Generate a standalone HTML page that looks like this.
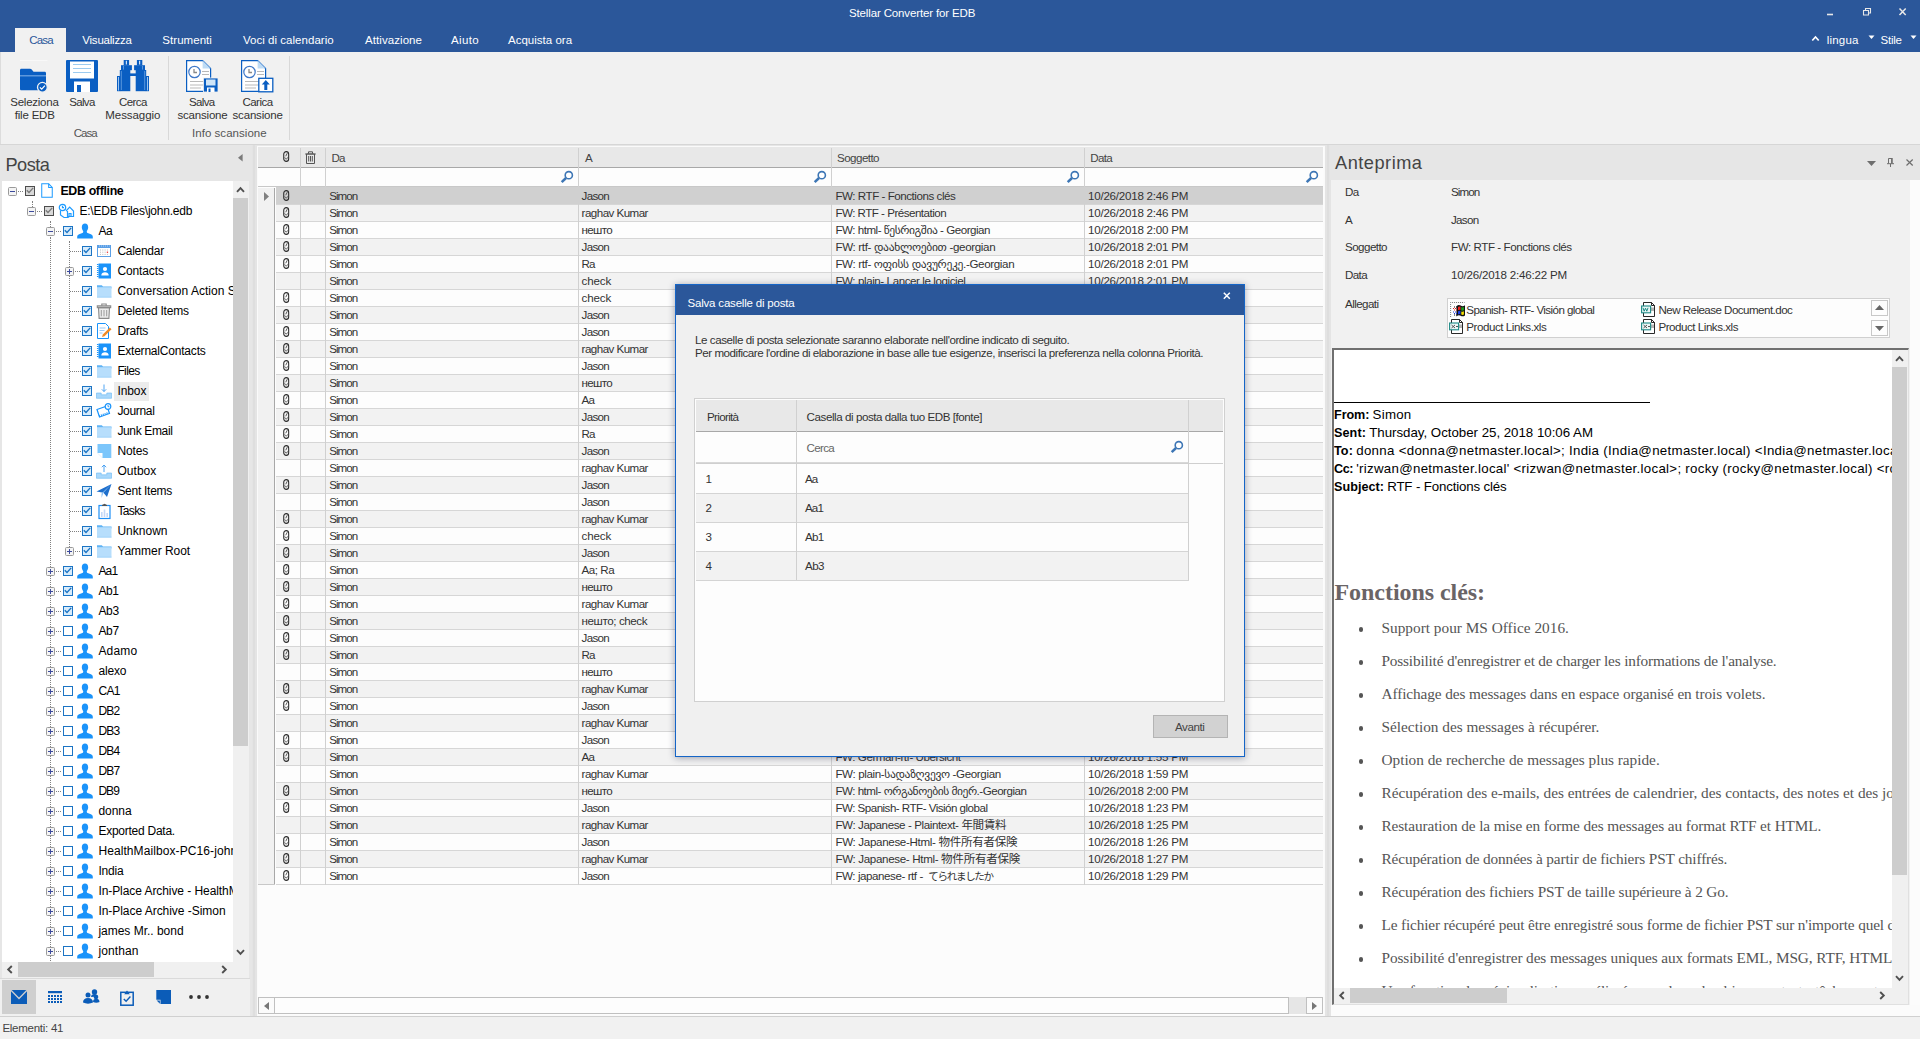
<!DOCTYPE html>
<html><head><meta charset="utf-8"><title>Stellar Converter for EDB</title>
<style>
*{box-sizing:border-box;margin:0;padding:0}
html,body{width:1920px;height:1039px;overflow:hidden;background:#f1f1f1}
body{font-family:"Liberation Sans","Noto Sans CJK JP","DejaVu Sans",sans-serif;font-size:12px;color:#333;position:relative}
.abs{position:absolute}
.t{position:absolute;white-space:pre;line-height:14px}
.u12{font-size:11.5px}.u12b{font-size:12.4px;font-weight:bold}.t12{font-size:12px}.k10{font-size:10.5px;color:#333}.g11{font-size:11.6px;color:#333}.u18{font-size:18.2px;color:#444}
.cal{font-size:13.3px;color:#000}
.ser{font-family:"Liberation Serif",serif;font-size:15.3px;color:#555}
.serb{font-family:"Liberation Serif",serif;font-size:24px;font-weight:bold;color:#6a6466}
svg{position:absolute;overflow:visible}
.tr{position:absolute;left:0;height:20px;width:231px;white-space:nowrap}
.cb{position:absolute;width:10px;height:10px;top:5px;border:1px solid #1b74c4;background:#fff}
.cb.on{background:#d9ecfb}
.cb.g{border-color:#4d4d4d;background:#d9d9d9}
.ex{position:absolute;width:9px;height:9px;top:6px;border:1px solid #9a9a9a;border-radius:1.5px;background:#f4f4f4}
.ex:before{content:"";position:absolute;left:1px;top:3px;width:5px;height:1px;background:#3c4a9c}
.ex.p:after{content:"";position:absolute;left:3px;top:1px;width:1px;height:5px;background:#3c4a9c}
.hd{position:absolute;border-top:1px dotted #808080;height:0}
.vd{position:absolute;border-left:1px dotted #808080;width:0}
.gr{position:absolute;left:276px;width:1047px;height:17px;border-bottom:1px solid #d6d6d6}
.gr.o{background:#f2f2f2}.gr.e{background:#fdfdfd}.gr.s{background:#d0d0d0}
.gr .t{top:1.5px}
.vl{position:absolute;width:1px;background:#d0d0d0}
.bu{position:absolute;left:24.500px;width:4.500px;height:4.500px;border-radius:50%;background:#555}
</style></head><body>


<div class="abs" style="left:0;top:0;width:1920px;height:52px;background:#2b579a"></div>
<div class="t u12" style="left:849px;top:6px;letter-spacing:-0.14px;color:#fff;">Stellar Converter for EDB</div>
<svg style="left:1820px;top:0" width="100" height="28"><path stroke="#e8e8e8" stroke-width="1.600" fill="none" d="M7 14.500h6"/><path stroke="#e8e8e8" stroke-width="1.100" fill="none" d="M43.500 10.500h5V15h-5zM45.500 10.500v-2h5V13h-2"/><path stroke="#e8e8e8" stroke-width="1.500" fill="none" d="M79.500 8.500l6.200 6.500M85.700 8.500l-6.200 6.500"/></svg>
<div class="abs" style="left:15px;top:28px;width:51px;height:25px;background:#f1f1f1"></div>
<div class="t u12" style="left:29.3px;top:33px;letter-spacing:-0.86px;color:#2b579a;">Casa</div>
<div class="t u12" style="left:82.3px;top:33px;letter-spacing:-0.22px;color:#fff;">Visualizza</div>
<div class="t u12" style="left:162.3px;top:33px;letter-spacing:0.05px;color:#fff;">Strumenti</div>
<div class="t u12" style="left:243px;top:33px;letter-spacing:0.03px;color:#fff;">Voci di calendario</div>
<div class="t u12" style="left:365px;top:33px;letter-spacing:0.07px;color:#fff;">Attivazione</div>
<div class="t u12" style="left:451px;top:33px;letter-spacing:0.36px;color:#fff;">Aiuto</div>
<div class="t u12" style="left:508px;top:33px;letter-spacing:0.01px;color:#fff;">Acquista ora</div>
<svg style="left:1811px;top:34px" width="10" height="8"><path d="M1.300 6.500l3.200-3.500 3.200 3.500" fill="none" stroke="#fff" stroke-width="1.700"/></svg>
<div class="t u12" style="left:1826.7px;top:33px;letter-spacing:0.22px;color:#fff;">lingua</div>
<svg style="left:1868px;top:35px" width="8" height="5"><path d="M.5 .5h6l-3 3.500z" fill="#fff"/></svg>
<div class="t u12" style="left:1880.5px;top:33px;letter-spacing:-0.24px;color:#fff;">Stile</div>
<svg style="left:1910px;top:35px" width="8" height="5"><path d="M.5 .5h6l-3 3.500z" fill="#fff"/></svg>
<div class="abs" style="left:0;top:52px;width:1920px;height:93px;background:#f1f1f1;border-bottom:1px solid #d6d6d6"></div>
<div class="abs" style="left:0;top:52px;width:1px;height:92px;background:#dcdcdc"></div>
<div class="abs" style="left:168px;top:56px;width:1px;height:84px;background:#d8d8d8"></div>
<div class="abs" style="left:289px;top:56px;width:1px;height:84px;background:#d8d8d8"></div>
<svg style="left:20px;top:60px" width="28" height="32" viewBox="0 0 28 32"><rect x="0" y=".2" width="27.500" height=".8" fill="#fbfbfb"/><path fill="#0a5ec2" d="M1.500 8.700H10c.8 0 1.200.3 1.700.9l1.800 2.200H24.500c1 0 1.500.5 1.500 1.500V28.700c0 1-.5 1.500-1.500 1.500h-23C.5 30.200 0 29.700 0 28.700V10.200c0-1 .5-1.500 1.500-1.500z"/><rect x="0" y="15" width="26" height="1.500" fill="#5c97dc"/><circle cx="22.400" cy="27.300" r="4.900" fill="#0a5ec2" stroke="#f1f1f1" stroke-width="1.300"/><path d="M19.900 27.400l1.800 1.800 3.200-3.500" stroke="#fff" stroke-width="1.200" fill="none"/></svg>
<svg style="left:66px;top:60px" width="32" height="32" viewBox="0 0 32 32"><rect width="32" height="32" fill="#0a5ec2" rx="1"/><rect x="4" y="1.500" width="24" height="17" fill="#fff"/><path stroke="#9ccbf0" stroke-width="1" d="M7 4.500h18M7 8.500h18M7 12.500h18"/><rect x="8" y="21.500" width="16" height="10.500" fill="#fff"/><rect x="11" y="25" width="4" height="7" fill="#0a5ec2"/></svg>
<svg style="left:117px;top:60px" width="32" height="32" viewBox="0 0 32 32"><g fill="#0a5ec2"><rect x="6.700" y="0" width="5.400" height="5.500"/><rect x="19.900" y="0" width="5.400" height="5.500"/><rect x="4" y="5.200" width="10.900" height="5"/><rect x="17.100" y="5.200" width="10.900" height="5"/><rect x="2.800" y="10" width="10.500" height="21.200"/><rect x="18.700" y="10" width="10.500" height="21.200"/><rect x="0" y="16" width="3.200" height="15.200"/><rect x="28.800" y="16" width="3.200" height="15.200"/><rect x="13" y="13.400" width="6" height="2.600"/></g><path stroke="#9cc4ef" stroke-width="1" d="M1.500 17v13.500M30.500 17v13.500"/><path stroke="#cfe2f7" stroke-width="1.200" d="M9.400 .8v3.800M22.600 .8v3.800"/><path stroke="#6ea6e3" stroke-width=".8" d="M4.300 11v19M27.700 11v19M6.500 5.800v3.800M25.500 5.800v3.800"/></svg>
<svg style="left:186px;top:60px" width="32" height="32" viewBox="0 0 32 32"><path fill="#fff" stroke="#0a5ec2" stroke-width="1.200" d="M.6 .6h16l8 8v22.800H.6z"/><path fill="#bfdcf5" d="M16.600 .6l8 8h-8z"/><circle cx="8.500" cy="12" r="5.700" fill="#fff" stroke="#3f78c8" stroke-width="1.200"/><path stroke="#8a8a8a" stroke-width="1.300" fill="none" d="M8 9v3.500h3"/><path stroke="#b9b9b9" stroke-width="1.200" d="M16 11.500h7M16 14.500h7M4 21.500h15M4 25h15M4 28h11"/><rect x="17.500" y="18" width="14.500" height="14" fill="#0a5ec2" stroke="#f1f1f1" stroke-width=".8"/><rect x="20" y="19.500" width="9.500" height="6" fill="#cfe5f8"/><rect x="21" y="27.500" width="7.500" height="4.500" fill="#fff"/><rect x="22.500" y="28.500" width="2" height="3.500" fill="#0a5ec2"/></svg>
<svg style="left:241px;top:60px" width="32" height="32" viewBox="0 0 32 32"><path fill="#fff" stroke="#0a5ec2" stroke-width="1.200" d="M.6 .6h16l8 8v22.800H.6z"/><path fill="#bfdcf5" d="M16.600 .6l8 8h-8z"/><circle cx="8.500" cy="12" r="5.700" fill="#fff" stroke="#3f78c8" stroke-width="1.200"/><path stroke="#8a8a8a" stroke-width="1.300" fill="none" d="M8 9v3.500h3"/><path stroke="#b9b9b9" stroke-width="1.200" d="M16 11.500h7M16 14.500h7M4 21.500h15M4 25h15M4 28h11"/><rect x="17.800" y="18.300" width="14" height="13.500" fill="#fff" stroke="#0a5ec2" stroke-width="1.300"/><path fill="#0a5ec2" d="M24.800 20l4 4.500h-2.500V30h-3v-5.500h-2.500z"/></svg>
<div class="t u12" style="left:10.3px;top:95px;letter-spacing:-0.25px;color:#333;">Seleziona</div>
<div class="t u12" style="left:14.7px;top:108px;letter-spacing:-0.19px;color:#333;">file EDB</div>
<div class="t u12" style="left:69.2px;top:95px;letter-spacing:-0.66px;color:#333;">Salva</div>
<div class="t u12" style="left:119px;top:95px;letter-spacing:-0.60px;color:#333;">Cerca</div>
<div class="t u12" style="left:105.3px;top:108px;letter-spacing:-0.07px;color:#333;">Messaggio</div>
<div class="t u12" style="left:189px;top:95px;letter-spacing:-0.66px;color:#333;">Salva</div>
<div class="t u12" style="left:177.5px;top:108px;letter-spacing:-0.20px;color:#333;">scansione</div>
<div class="t u12" style="left:242.5px;top:95px;letter-spacing:-0.54px;color:#333;">Carica</div>
<div class="t u12" style="left:232.5px;top:108px;letter-spacing:-0.17px;color:#333;">scansione</div>
<div class="t u12" style="left:73.7px;top:126px;letter-spacing:-0.96px;color:#555;">Casa</div>
<div class="t u12" style="left:192px;top:126px;letter-spacing:0.04px;color:#555;">Info scansione</div>
<div class="abs" style="left:0;top:145px;width:1920px;height:872px;background:#e6e6e6"></div>
<div class="abs" style="left:0;top:145px;width:252px;height:871px;background:#e6e6e6"></div>
<div class="t u18" style="left:5.5px;top:153.7px;letter-spacing:-0.54px;color:#444;line-height:22px;">Posta</div>
<svg style="left:237.500px;top:154px" width="5" height="8"><path d="M4.600 0v7.400L0 3.700z" fill="#7a7a7a"/></svg>
<div class="abs" id="tree" style="left:2px;top:181px;width:231px;height:781px;background:#fff;overflow:hidden">
<div class="vd" style="left:30px;top:20px;height:6px"></div>
<div class="vd" style="left:48px;top:40px;height:6px"></div>
<div class="vd" style="left:48px;top:56px;height:730px"></div>
<div class="vd" style="left:67px;top:60px;height:310px"></div>
<div class="tr" style="top:0px"><div class="ex" style="left:6px"></div><div class="hd" style="left:16px;top:10px;width:5px"></div><div class="cb g" style="left:23px"><svg style="left:.3px;top:-.2px" width="8" height="7" viewBox="0 0 8 7"><path d="M.8 3.300L3 5.500 7.200 .9" fill="none" stroke="#7a7a7a" stroke-width="1.400"/></svg></div><svg style="left:39px;top:2px" width="12" height="15" viewBox="0 0 13 16"><path fill="#fff" stroke="#1e9bff" stroke-width="1.100" d="M.8 .8h7.500l3.900 3.900v10.500H.8z"/><path fill="none" stroke="#1e9bff" stroke-width="1.100" d="M8.300 .8v3.900h3.900"/></svg>
<div class="t u12b" style="left:58.4px;top:2.5px;letter-spacing:-0.34px;color:#000;">EDB offline</div>
</div>
<div class="tr" style="top:20px"><div class="ex" style="left:25px"></div><div class="hd" style="left:35px;top:10px;width:5px"></div><div class="cb g" style="left:42px"><svg style="left:.3px;top:-.2px" width="8" height="7" viewBox="0 0 8 7"><path d="M.8 3.300L3 5.500 7.200 .9" fill="none" stroke="#7a7a7a" stroke-width="1.400"/></svg></div><svg style="left:56px;top:2px" width="17" height="16" viewBox="0 0 17 16"><g fill="none" stroke="#1e9bff" stroke-width="1.200"><circle cx="4.500" cy="4.500" r="3.200"/><path d="M4.500 2.800v1.900H6"/><path d="M2.500 7.500V12L6 14.500h4l2-1.500"/><path d="M8 8l3.700-3.800L15.500 8v5.500h-6V8"/><path d="M11 13.500v-3h2v3"/></g></svg>
<div class="t t12" style="left:77.4px;top:2.5px;letter-spacing:-0.22px;color:#000;">E:\EDB Files\john.edb</div>
</div>
<div class="tr" style="top:40px"><div class="ex" style="left:44px"></div><div class="hd" style="left:54px;top:10px;width:5px"></div><div class="cb on" style="left:61px"><svg style="left:.3px;top:-.2px" width="8" height="7" viewBox="0 0 8 7"><path d="M.8 3.300L3 5.500 7.200 .9" fill="none" stroke="#1b74c4" stroke-width="1.400"/></svg></div><svg style="left:75px;top:2px" width="16" height="16" viewBox="0 0 16 16"><path fill="#1a93fa" d="M8 .6c2 0 3.200 1.500 3.200 3.600 0 1.500-.6 2.900-1.400 3.700v1c0 .5.4.9 1.500 1.300l2.600 1c1.200.5 1.900 1.300 1.900 2.600v1.700H.2v-1.700c0-1.300.7-2.100 1.900-2.600l2.600-1c1.100-.4 1.500-.8 1.500-1.300v-1C5.400 7.100 4.800 5.700 4.800 4.200 4.800 2.100 6 .6 8 .6z"/></svg>
<div class="t t12" style="left:96.4px;top:2.5px;letter-spacing:-0.44px;color:#000;">Aa</div>
</div>
<div class="tr" style="top:60px"><div class="hd" style="left:68px;top:10px;width:11px"></div><div class="cb on" style="left:80px"><svg style="left:.3px;top:-.2px" width="8" height="7" viewBox="0 0 8 7"><path d="M.8 3.300L3 5.500 7.200 .9" fill="none" stroke="#1b74c4" stroke-width="1.400"/></svg></div><svg style="left:94px;top:2px" width="16" height="16" viewBox="0 0 16 16"><rect x="1.500" y="2.500" width="13" height="11" fill="#fff" stroke="#5a9fe6" stroke-width="1"/><rect x="1" y="2" width="14" height="3" fill="#5a9fe6"/><path stroke="#fff" stroke-width=".7" stroke-dasharray=".8 1.200" d="M3 3h10.500"/><g fill="#bdbdbd"><rect x="4" y="6.500" width="1" height="1"/><rect x="6.300" y="6.500" width="1" height="1"/><rect x="8.600" y="6.500" width="1" height="1"/><rect x="10.900" y="6.500" width="1" height="1"/><rect x="4" y="8.700" width="1" height="1"/><rect x="6.300" y="8.700" width="1" height="1"/><rect x="8.600" y="8.700" width="1" height="1"/><rect x="4" y="10.900" width="1" height="1"/><rect x="6.300" y="10.900" width="1" height="1"/><rect x="8.600" y="10.900" width="1" height="1"/><rect x="10.900" y="10.900" width="1" height="1"/></g><rect x="10.800" y="8.600" width="1.300" height="1.300" fill="#e33"/></svg>
<div class="t t12" style="left:115.4px;top:2.5px;letter-spacing:-0.28px;color:#000;">Calendar</div>
</div>
<div class="tr" style="top:80px"><div class="ex p" style="left:63px"></div><div class="hd" style="left:73px;top:10px;width:5px"></div><div class="cb on" style="left:80px"><svg style="left:.3px;top:-.2px" width="8" height="7" viewBox="0 0 8 7"><path d="M.8 3.300L3 5.500 7.200 .9" fill="none" stroke="#1b74c4" stroke-width="1.400"/></svg></div><svg style="left:94px;top:2px" width="16" height="16" viewBox="0 0 16 16"><rect x="2.500" y=".5" width="12.500" height="15" fill="#1a93fa"/><path stroke="#1a93fa" stroke-width="1.500" stroke-dasharray="1 1" d="M1.700 1v14"/><circle cx="9" cy="6" r="2.100" fill="#fff"/><path fill="#fff" d="M5.300 12.500c0-2.200 1.600-3.300 3.700-3.300s3.700 1.100 3.700 3.300z"/></svg>
<div class="t t12" style="left:115.4px;top:2.5px;letter-spacing:-0.11px;color:#000;">Contacts</div>
</div>
<div class="tr" style="top:100px"><div class="hd" style="left:68px;top:10px;width:11px"></div><div class="cb on" style="left:80px"><svg style="left:.3px;top:-.2px" width="8" height="7" viewBox="0 0 8 7"><path d="M.8 3.300L3 5.500 7.200 .9" fill="none" stroke="#1b74c4" stroke-width="1.400"/></svg></div><svg style="left:94px;top:2px" width="16" height="16" viewBox="0 0 16 16"><path fill="#5fb3f5" d="M1 2.300h4.800l1.200 1.300H15.500v2H1z"/><path fill="#b7defc" d="M1 4.200h14.500v10.300H1z"/><path fill="#9fd1f8" d="M1 13.700h14.500v.8H1z"/></svg>
<div class="t t12" style="left:115.4px;top:2.5px;letter-spacing:0.01px;color:#000;">Conversation Action Settings</div>
</div>
<div class="tr" style="top:120px"><div class="hd" style="left:68px;top:10px;width:11px"></div><div class="cb on" style="left:80px"><svg style="left:.3px;top:-.2px" width="8" height="7" viewBox="0 0 8 7"><path d="M.8 3.300L3 5.500 7.200 .9" fill="none" stroke="#1b74c4" stroke-width="1.400"/></svg></div><svg style="left:94px;top:2px" width="16" height="16" viewBox="0 0 16 16"><path fill="#ececec" stroke="#8a8a8a" stroke-width="1.100" d="M2.500 4.600h11l-.6 10.800H3.100z"/><path fill="#dcdcdc" stroke="#8a8a8a" stroke-width="1.100" d="M1.300 2.900h13.400v1.700H1.300z"/><path fill="none" stroke="#8a8a8a" stroke-width="1.100" d="M5.800 2.700V1h4.400v1.700"/><path fill="none" stroke="#9a9a9a" stroke-width="1" d="M5.300 7v6.300M8 7v6.300M10.700 7v6.300"/></svg>
<div class="t t12" style="left:115.4px;top:2.5px;letter-spacing:-0.20px;color:#000;">Deleted Items</div>
</div>
<div class="tr" style="top:140px"><div class="hd" style="left:68px;top:10px;width:11px"></div><div class="cb on" style="left:80px"><svg style="left:.3px;top:-.2px" width="8" height="7" viewBox="0 0 8 7"><path d="M.8 3.300L3 5.500 7.200 .9" fill="none" stroke="#1b74c4" stroke-width="1.400"/></svg></div><svg style="left:94px;top:2px" width="16" height="16" viewBox="0 0 16 16"><path fill="#fff" stroke="#1a93fa" stroke-width="1" d="M1.500 .5h8l3 3v12h-11z"/><path stroke="#9cc9f5" stroke-width="1" d="M3.500 5h6M3.500 7.500h5M3.500 10h3"/><path fill="#f08a24" d="M13.800 4.500l1.700 1.700-7 7-2.500.8.800-2.500z"/></svg>
<div class="t t12" style="left:115.4px;top:2.5px;letter-spacing:-0.22px;color:#000;">Drafts</div>
</div>
<div class="tr" style="top:160px"><div class="hd" style="left:68px;top:10px;width:11px"></div><div class="cb on" style="left:80px"><svg style="left:.3px;top:-.2px" width="8" height="7" viewBox="0 0 8 7"><path d="M.8 3.300L3 5.500 7.200 .9" fill="none" stroke="#1b74c4" stroke-width="1.400"/></svg></div><svg style="left:94px;top:2px" width="16" height="16" viewBox="0 0 16 16"><rect x="2.500" y=".5" width="12.500" height="15" fill="#1a93fa"/><path stroke="#1a93fa" stroke-width="1.500" stroke-dasharray="1 1" d="M1.700 1v14"/><circle cx="9" cy="6" r="2.100" fill="#fff"/><path fill="#fff" d="M5.300 12.500c0-2.200 1.600-3.300 3.700-3.300s3.700 1.100 3.700 3.300z"/></svg>
<div class="t t12" style="left:115.4px;top:2.5px;letter-spacing:-0.20px;color:#000;">ExternalContacts</div>
</div>
<div class="tr" style="top:180px"><div class="hd" style="left:68px;top:10px;width:11px"></div><div class="cb on" style="left:80px"><svg style="left:.3px;top:-.2px" width="8" height="7" viewBox="0 0 8 7"><path d="M.8 3.300L3 5.500 7.200 .9" fill="none" stroke="#1b74c4" stroke-width="1.400"/></svg></div><svg style="left:94px;top:2px" width="16" height="16" viewBox="0 0 16 16"><path fill="#5fb3f5" d="M1 2.300h4.800l1.200 1.300H15.500v2H1z"/><path fill="#b7defc" d="M1 4.200h14.500v10.300H1z"/><path fill="#9fd1f8" d="M1 13.700h14.500v.8H1z"/></svg>
<div class="t t12" style="left:115.4px;top:2.5px;letter-spacing:-0.63px;color:#000;">Files</div>
</div>
<div class="tr" style="top:200px"><div class="hd" style="left:68px;top:10px;width:11px"></div><div class="cb on" style="left:80px"><svg style="left:.3px;top:-.2px" width="8" height="7" viewBox="0 0 8 7"><path d="M.8 3.300L3 5.500 7.200 .9" fill="none" stroke="#1b74c4" stroke-width="1.400"/></svg></div><svg style="left:94px;top:2px" width="16" height="16" viewBox="0 0 16 16"><path fill="#a9d8fb" stroke="#6ab8f5" stroke-width=".6" d="M.5 10h4.700v1.800h5.600V10h4.700v5.300H.5z"/><path fill="none" stroke="#3c9af0" stroke-width=".9" d="M8 1.500v7M5.800 6.300L8 8.500l2.200-2.200"/></svg>
<div class="abs" style="left:112.4px;top:1px;width:35px;height:19px;background:#ececec"></div>
<div class="t t12" style="left:115.4px;top:2.5px;letter-spacing:-0.07px;color:#000;">Inbox</div>
</div>
<div class="tr" style="top:220px"><div class="hd" style="left:68px;top:10px;width:11px"></div><div class="cb on" style="left:80px"><svg style="left:.3px;top:-.2px" width="8" height="7" viewBox="0 0 8 7"><path d="M.8 3.300L3 5.500 7.200 .9" fill="none" stroke="#1b74c4" stroke-width="1.400"/></svg></div><svg style="left:94px;top:2px" width="16" height="16" viewBox="0 0 16 16"><path fill="#fff" stroke="#1a93fa" stroke-width="1.200" d="M1 6.500L11 3l2.500 7.500-10 3.500z"/><path stroke="#1a93fa" stroke-width="1.600" stroke-dasharray="1 1" d="M3 13l9.500-3.300"/><circle cx="12" cy="3.500" r="2.800" fill="#fff" stroke="#1a93fa" stroke-width="1.200"/><path stroke="#1a93fa" stroke-width=".9" fill="none" d="M12 2v1.700h1.300"/></svg>
<div class="t t12" style="left:115.4px;top:2.5px;letter-spacing:-0.31px;color:#000;">Journal</div>
</div>
<div class="tr" style="top:240px"><div class="hd" style="left:68px;top:10px;width:11px"></div><div class="cb on" style="left:80px"><svg style="left:.3px;top:-.2px" width="8" height="7" viewBox="0 0 8 7"><path d="M.8 3.300L3 5.500 7.200 .9" fill="none" stroke="#1b74c4" stroke-width="1.400"/></svg></div><svg style="left:94px;top:2px" width="16" height="16" viewBox="0 0 16 16"><path fill="#5fb3f5" d="M1 2.300h4.800l1.200 1.300H15.500v2H1z"/><path fill="#b7defc" d="M1 4.200h14.500v10.300H1z"/><path fill="#9fd1f8" d="M1 13.700h14.500v.8H1z"/></svg>
<div class="t t12" style="left:115.4px;top:2.5px;letter-spacing:-0.35px;color:#000;">Junk Email</div>
</div>
<div class="tr" style="top:260px"><div class="hd" style="left:68px;top:10px;width:11px"></div><div class="cb on" style="left:80px"><svg style="left:.3px;top:-.2px" width="8" height="7" viewBox="0 0 8 7"><path d="M.8 3.300L3 5.500 7.200 .9" fill="none" stroke="#1b74c4" stroke-width="1.400"/></svg></div><svg style="left:94px;top:2px" width="16" height="16" viewBox="0 0 16 16"><path fill="#7cc6fb" d="M1.500 1h13.800v14H6.500l-5-5z"/><path fill="#fff" d="M1.500 10h5v5z"/><path fill="#b9e0fc" d="M6.500 10v5l-5-5z" opacity="0"/></svg>
<div class="t t12" style="left:115.4px;top:2.5px;letter-spacing:-0.13px;color:#000;">Notes</div>
</div>
<div class="tr" style="top:280px"><div class="hd" style="left:68px;top:10px;width:11px"></div><div class="cb on" style="left:80px"><svg style="left:.3px;top:-.2px" width="8" height="7" viewBox="0 0 8 7"><path d="M.8 3.300L3 5.500 7.200 .9" fill="none" stroke="#1b74c4" stroke-width="1.400"/></svg></div><svg style="left:94px;top:2px" width="16" height="16" viewBox="0 0 16 16"><path fill="#a9d8fb" stroke="#6ab8f5" stroke-width=".6" d="M.5 10h4.700v1.800h5.600V10h4.700v5.300H.5z"/><path fill="none" stroke="#3c9af0" stroke-width=".9" d="M8 9V2M5.800 4.200L8 2l2.200 2.200"/></svg>
<div class="t t12" style="left:115.4px;top:2.5px;letter-spacing:0.05px;color:#000;">Outbox</div>
</div>
<div class="tr" style="top:300px"><div class="hd" style="left:68px;top:10px;width:11px"></div><div class="cb on" style="left:80px"><svg style="left:.3px;top:-.2px" width="8" height="7" viewBox="0 0 8 7"><path d="M.8 3.300L3 5.500 7.200 .9" fill="none" stroke="#1b74c4" stroke-width="1.400"/></svg></div><svg style="left:94px;top:2px" width="16" height="16" viewBox="0 0 16 16"><path fill="#1e6fcc" d="M.5 8.500L15.500 1 11 14 7.500 9.800z"/><path fill="#8ec3f5" d="M15.500 1l-10 9.500V15l2-5.200z"/></svg>
<div class="t t12" style="left:115.4px;top:2.5px;letter-spacing:-0.27px;color:#000;">Sent Items</div>
</div>
<div class="tr" style="top:320px"><div class="hd" style="left:68px;top:10px;width:11px"></div><div class="cb on" style="left:80px"><svg style="left:.3px;top:-.2px" width="8" height="7" viewBox="0 0 8 7"><path d="M.8 3.300L3 5.500 7.200 .9" fill="none" stroke="#1b74c4" stroke-width="1.400"/></svg></div><svg style="left:94px;top:2px" width="16" height="16" viewBox="0 0 16 16"><rect x="3" y="2.500" width="11" height="13" fill="#fff" stroke="#1e8ff5" stroke-width="1.200"/><path fill="#555" d="M6 3V2l2.500-1.300L11 2v1z"/><path stroke="#c3d8f7" stroke-width="1.600" d="M5.800 14V9M8.500 14V6.500M11.200 14V10"/></svg>
<div class="t t12" style="left:115.4px;top:2.5px;letter-spacing:-0.64px;color:#000;">Tasks</div>
</div>
<div class="tr" style="top:340px"><div class="hd" style="left:68px;top:10px;width:11px"></div><div class="cb on" style="left:80px"><svg style="left:.3px;top:-.2px" width="8" height="7" viewBox="0 0 8 7"><path d="M.8 3.300L3 5.500 7.200 .9" fill="none" stroke="#1b74c4" stroke-width="1.400"/></svg></div><svg style="left:94px;top:2px" width="16" height="16" viewBox="0 0 16 16"><path fill="#5fb3f5" d="M1 2.300h4.800l1.200 1.300H15.500v2H1z"/><path fill="#b7defc" d="M1 4.200h14.500v10.300H1z"/><path fill="#9fd1f8" d="M1 13.700h14.500v.8H1z"/></svg>
<div class="t t12" style="left:115.4px;top:2.5px;letter-spacing:0.02px;color:#000;">Unknown</div>
</div>
<div class="tr" style="top:360px"><div class="ex p" style="left:63px"></div><div class="hd" style="left:73px;top:10px;width:5px"></div><div class="cb on" style="left:80px"><svg style="left:.3px;top:-.2px" width="8" height="7" viewBox="0 0 8 7"><path d="M.8 3.300L3 5.500 7.200 .9" fill="none" stroke="#1b74c4" stroke-width="1.400"/></svg></div><svg style="left:94px;top:2px" width="16" height="16" viewBox="0 0 16 16"><path fill="#5fb3f5" d="M1 2.300h4.800l1.200 1.300H15.500v2H1z"/><path fill="#b7defc" d="M1 4.200h14.500v10.300H1z"/><path fill="#9fd1f8" d="M1 13.700h14.500v.8H1z"/></svg>
<div class="t t12" style="left:115.4px;top:2.5px;letter-spacing:-0.04px;color:#000;">Yammer Root</div>
</div>
<div class="tr" style="top:380px"><div class="ex p" style="left:44px"></div><div class="hd" style="left:54px;top:10px;width:5px"></div><div class="cb on" style="left:61px"><svg style="left:.3px;top:-.2px" width="8" height="7" viewBox="0 0 8 7"><path d="M.8 3.300L3 5.500 7.200 .9" fill="none" stroke="#1b74c4" stroke-width="1.400"/></svg></div><svg style="left:75px;top:2px" width="16" height="16" viewBox="0 0 16 16"><path fill="#1a93fa" d="M8 .6c2 0 3.200 1.500 3.200 3.600 0 1.500-.6 2.900-1.400 3.700v1c0 .5.4.9 1.500 1.300l2.600 1c1.200.5 1.900 1.300 1.900 2.600v1.700H.2v-1.700c0-1.300.7-2.100 1.900-2.600l2.600-1c1.100-.4 1.500-.8 1.500-1.300v-1C5.400 7.100 4.800 5.700 4.800 4.200 4.800 2.100 6 .6 8 .6z"/></svg>
<div class="t t12" style="left:96.4px;top:2.5px;letter-spacing:-0.79px;color:#000;">Aa1</div>
</div>
<div class="tr" style="top:400px"><div class="ex p" style="left:44px"></div><div class="hd" style="left:54px;top:10px;width:5px"></div><div class="cb on" style="left:61px"><svg style="left:.3px;top:-.2px" width="8" height="7" viewBox="0 0 8 7"><path d="M.8 3.300L3 5.500 7.200 .9" fill="none" stroke="#1b74c4" stroke-width="1.400"/></svg></div><svg style="left:75px;top:2px" width="16" height="16" viewBox="0 0 16 16"><path fill="#1a93fa" d="M8 .6c2 0 3.200 1.500 3.200 3.600 0 1.500-.6 2.900-1.400 3.700v1c0 .5.4.9 1.500 1.300l2.600 1c1.200.5 1.900 1.300 1.900 2.600v1.700H.2v-1.700c0-1.300.7-2.100 1.900-2.600l2.600-1c1.100-.4 1.500-.8 1.500-1.300v-1C5.400 7.100 4.800 5.700 4.800 4.200 4.800 2.100 6 .6 8 .6z"/></svg>
<div class="t t12" style="left:96.4px;top:2.5px;letter-spacing:-0.45px;color:#000;">Ab1</div>
</div>
<div class="tr" style="top:420px"><div class="ex p" style="left:44px"></div><div class="hd" style="left:54px;top:10px;width:5px"></div><div class="cb on" style="left:61px"><svg style="left:.3px;top:-.2px" width="8" height="7" viewBox="0 0 8 7"><path d="M.8 3.300L3 5.500 7.200 .9" fill="none" stroke="#1b74c4" stroke-width="1.400"/></svg></div><svg style="left:75px;top:2px" width="16" height="16" viewBox="0 0 16 16"><path fill="#1a93fa" d="M8 .6c2 0 3.200 1.500 3.200 3.600 0 1.500-.6 2.900-1.400 3.700v1c0 .5.4.9 1.500 1.300l2.600 1c1.200.5 1.900 1.300 1.900 2.600v1.700H.2v-1.700c0-1.300.7-2.100 1.900-2.600l2.600-1c1.100-.4 1.500-.8 1.500-1.300v-1C5.400 7.100 4.800 5.700 4.800 4.200 4.800 2.100 6 .6 8 .6z"/></svg>
<div class="t t12" style="left:96.4px;top:2.5px;letter-spacing:-0.29px;color:#000;">Ab3</div>
</div>
<div class="tr" style="top:440px"><div class="ex p" style="left:44px"></div><div class="hd" style="left:54px;top:10px;width:5px"></div><div class="cb" style="left:61px"></div><svg style="left:75px;top:2px" width="16" height="16" viewBox="0 0 16 16"><path fill="#1a93fa" d="M8 .6c2 0 3.200 1.500 3.200 3.600 0 1.500-.6 2.900-1.400 3.700v1c0 .5.4.9 1.500 1.300l2.600 1c1.200.5 1.900 1.300 1.900 2.600v1.700H.2v-1.700c0-1.300.7-2.100 1.900-2.600l2.600-1c1.100-.4 1.500-.8 1.500-1.300v-1C5.400 7.100 4.800 5.700 4.800 4.200 4.800 2.100 6 .6 8 .6z"/></svg>
<div class="t t12" style="left:96.4px;top:2.5px;letter-spacing:-0.29px;color:#000;">Ab7</div>
</div>
<div class="tr" style="top:460px"><div class="ex p" style="left:44px"></div><div class="hd" style="left:54px;top:10px;width:5px"></div><div class="cb" style="left:61px"></div><svg style="left:75px;top:2px" width="16" height="16" viewBox="0 0 16 16"><path fill="#1a93fa" d="M8 .6c2 0 3.200 1.500 3.200 3.600 0 1.500-.6 2.900-1.400 3.700v1c0 .5.4.9 1.500 1.300l2.600 1c1.200.5 1.900 1.300 1.900 2.600v1.700H.2v-1.700c0-1.300.7-2.100 1.900-2.600l2.600-1c1.100-.4 1.500-.8 1.500-1.300v-1C5.400 7.100 4.800 5.700 4.800 4.200 4.800 2.100 6 .6 8 .6z"/></svg>
<div class="t t12" style="left:96.4px;top:2.5px;letter-spacing:0.19px;color:#000;">Adamo</div>
</div>
<div class="tr" style="top:480px"><div class="ex p" style="left:44px"></div><div class="hd" style="left:54px;top:10px;width:5px"></div><div class="cb" style="left:61px"></div><svg style="left:75px;top:2px" width="16" height="16" viewBox="0 0 16 16"><path fill="#1a93fa" d="M8 .6c2 0 3.200 1.500 3.200 3.600 0 1.500-.6 2.900-1.400 3.700v1c0 .5.4.9 1.500 1.300l2.600 1c1.200.5 1.900 1.300 1.900 2.600v1.700H.2v-1.700c0-1.300.7-2.100 1.900-2.600l2.600-1c1.100-.4 1.500-.8 1.500-1.300v-1C5.400 7.100 4.800 5.700 4.800 4.200 4.800 2.100 6 .6 8 .6z"/></svg>
<div class="t t12" style="left:96.4px;top:2.5px;letter-spacing:-0.14px;color:#000;">alexo</div>
</div>
<div class="tr" style="top:500px"><div class="ex p" style="left:44px"></div><div class="hd" style="left:54px;top:10px;width:5px"></div><div class="cb" style="left:61px"></div><svg style="left:75px;top:2px" width="16" height="16" viewBox="0 0 16 16"><path fill="#1a93fa" d="M8 .6c2 0 3.200 1.500 3.200 3.600 0 1.500-.6 2.900-1.400 3.700v1c0 .5.4.9 1.500 1.300l2.600 1c1.200.5 1.900 1.300 1.900 2.600v1.700H.2v-1.700c0-1.300.7-2.100 1.900-2.600l2.600-1c1.100-.4 1.500-.8 1.500-1.300v-1C5.400 7.100 4.800 5.700 4.800 4.200 4.800 2.100 6 .6 8 .6z"/></svg>
<div class="t t12" style="left:96.4px;top:2.5px;letter-spacing:-0.61px;color:#000;">CA1</div>
</div>
<div class="tr" style="top:520px"><div class="ex p" style="left:44px"></div><div class="hd" style="left:54px;top:10px;width:5px"></div><div class="cb" style="left:61px"></div><svg style="left:75px;top:2px" width="16" height="16" viewBox="0 0 16 16"><path fill="#1a93fa" d="M8 .6c2 0 3.200 1.500 3.200 3.600 0 1.500-.6 2.900-1.400 3.700v1c0 .5.4.9 1.500 1.300l2.600 1c1.200.5 1.900 1.300 1.900 2.600v1.700H.2v-1.700c0-1.300.7-2.100 1.900-2.600l2.600-1c1.100-.4 1.500-.8 1.500-1.300v-1C5.400 7.100 4.800 5.700 4.800 4.200 4.800 2.100 6 .6 8 .6z"/></svg>
<div class="t t12" style="left:96.4px;top:2.5px;letter-spacing:-0.78px;color:#000;">DB2</div>
</div>
<div class="tr" style="top:540px"><div class="ex p" style="left:44px"></div><div class="hd" style="left:54px;top:10px;width:5px"></div><div class="cb" style="left:61px"></div><svg style="left:75px;top:2px" width="16" height="16" viewBox="0 0 16 16"><path fill="#1a93fa" d="M8 .6c2 0 3.200 1.500 3.200 3.600 0 1.500-.6 2.900-1.400 3.700v1c0 .5.4.9 1.500 1.300l2.600 1c1.200.5 1.900 1.300 1.900 2.600v1.700H.2v-1.700c0-1.300.7-2.100 1.900-2.600l2.600-1c1.100-.4 1.500-.8 1.500-1.300v-1C5.400 7.100 4.800 5.700 4.800 4.200 4.800 2.100 6 .6 8 .6z"/></svg>
<div class="t t12" style="left:96.4px;top:2.5px;letter-spacing:-0.78px;color:#000;">DB3</div>
</div>
<div class="tr" style="top:560px"><div class="ex p" style="left:44px"></div><div class="hd" style="left:54px;top:10px;width:5px"></div><div class="cb" style="left:61px"></div><svg style="left:75px;top:2px" width="16" height="16" viewBox="0 0 16 16"><path fill="#1a93fa" d="M8 .6c2 0 3.200 1.500 3.200 3.600 0 1.500-.6 2.900-1.400 3.700v1c0 .5.4.9 1.500 1.300l2.600 1c1.200.5 1.900 1.300 1.900 2.600v1.700H.2v-1.700c0-1.300.7-2.100 1.900-2.600l2.600-1c1.100-.4 1.500-.8 1.500-1.300v-1C5.400 7.100 4.800 5.700 4.800 4.200 4.800 2.100 6 .6 8 .6z"/></svg>
<div class="t t12" style="left:96.4px;top:2.5px;letter-spacing:-0.78px;color:#000;">DB4</div>
</div>
<div class="tr" style="top:580px"><div class="ex p" style="left:44px"></div><div class="hd" style="left:54px;top:10px;width:5px"></div><div class="cb" style="left:61px"></div><svg style="left:75px;top:2px" width="16" height="16" viewBox="0 0 16 16"><path fill="#1a93fa" d="M8 .6c2 0 3.200 1.500 3.200 3.600 0 1.500-.6 2.900-1.400 3.700v1c0 .5.4.9 1.500 1.300l2.600 1c1.200.5 1.900 1.300 1.900 2.600v1.700H.2v-1.700c0-1.300.7-2.100 1.900-2.600l2.600-1c1.100-.4 1.500-.8 1.500-1.300v-1C5.400 7.100 4.800 5.700 4.800 4.200 4.800 2.100 6 .6 8 .6z"/></svg>
<div class="t t12" style="left:96.4px;top:2.5px;letter-spacing:-0.78px;color:#000;">DB7</div>
</div>
<div class="tr" style="top:600px"><div class="ex p" style="left:44px"></div><div class="hd" style="left:54px;top:10px;width:5px"></div><div class="cb" style="left:61px"></div><svg style="left:75px;top:2px" width="16" height="16" viewBox="0 0 16 16"><path fill="#1a93fa" d="M8 .6c2 0 3.200 1.500 3.200 3.600 0 1.500-.6 2.900-1.400 3.700v1c0 .5.4.9 1.500 1.300l2.600 1c1.200.5 1.900 1.300 1.900 2.600v1.700H.2v-1.700c0-1.300.7-2.100 1.900-2.600l2.600-1c1.100-.4 1.500-.8 1.500-1.300v-1C5.400 7.100 4.800 5.700 4.800 4.200 4.800 2.100 6 .6 8 .6z"/></svg>
<div class="t t12" style="left:96.4px;top:2.5px;letter-spacing:-0.95px;color:#000;">DB9</div>
</div>
<div class="tr" style="top:620px"><div class="ex p" style="left:44px"></div><div class="hd" style="left:54px;top:10px;width:5px"></div><div class="cb" style="left:61px"></div><svg style="left:75px;top:2px" width="16" height="16" viewBox="0 0 16 16"><path fill="#1a93fa" d="M8 .6c2 0 3.200 1.500 3.200 3.600 0 1.500-.6 2.900-1.400 3.700v1c0 .5.4.9 1.500 1.300l2.600 1c1.200.5 1.900 1.300 1.900 2.600v1.700H.2v-1.700c0-1.300.7-2.100 1.900-2.600l2.600-1c1.100-.4 1.500-.8 1.500-1.300v-1C5.400 7.100 4.800 5.700 4.800 4.200 4.800 2.100 6 .6 8 .6z"/></svg>
<div class="t t12" style="left:96.4px;top:2.5px;letter-spacing:-0.03px;color:#000;">donna</div>
</div>
<div class="tr" style="top:640px"><div class="ex p" style="left:44px"></div><div class="hd" style="left:54px;top:10px;width:5px"></div><div class="cb" style="left:61px"></div><svg style="left:75px;top:2px" width="16" height="16" viewBox="0 0 16 16"><path fill="#1a93fa" d="M8 .6c2 0 3.200 1.500 3.200 3.600 0 1.500-.6 2.900-1.400 3.700v1c0 .5.4.9 1.500 1.300l2.600 1c1.200.5 1.900 1.300 1.900 2.600v1.700H.2v-1.700c0-1.300.7-2.100 1.900-2.600l2.600-1c1.100-.4 1.500-.8 1.500-1.300v-1C5.400 7.100 4.800 5.700 4.800 4.200 4.800 2.100 6 .6 8 .6z"/></svg>
<div class="t t12" style="left:96.4px;top:2.5px;letter-spacing:-0.25px;color:#000;">Exported Data.</div>
</div>
<div class="tr" style="top:660px"><div class="ex p" style="left:44px"></div><div class="hd" style="left:54px;top:10px;width:5px"></div><div class="cb" style="left:61px"></div><svg style="left:75px;top:2px" width="16" height="16" viewBox="0 0 16 16"><path fill="#1a93fa" d="M8 .6c2 0 3.200 1.500 3.200 3.600 0 1.500-.6 2.900-1.400 3.700v1c0 .5.4.9 1.500 1.300l2.600 1c1.200.5 1.900 1.300 1.900 2.600v1.700H.2v-1.700c0-1.300.7-2.100 1.900-2.600l2.600-1c1.100-.4 1.500-.8 1.500-1.300v-1C5.400 7.100 4.800 5.700 4.800 4.200 4.800 2.100 6 .6 8 .6z"/></svg>
<div class="t t12" style="left:96.4px;top:2.5px;letter-spacing:0.09px;color:#000;">HealthMailbox-PC16-john-fb4</div>
</div>
<div class="tr" style="top:680px"><div class="ex p" style="left:44px"></div><div class="hd" style="left:54px;top:10px;width:5px"></div><div class="cb" style="left:61px"></div><svg style="left:75px;top:2px" width="16" height="16" viewBox="0 0 16 16"><path fill="#1a93fa" d="M8 .6c2 0 3.200 1.500 3.200 3.600 0 1.500-.6 2.900-1.400 3.700v1c0 .5.4.9 1.500 1.300l2.600 1c1.200.5 1.900 1.300 1.900 2.600v1.700H.2v-1.700c0-1.300.7-2.100 1.900-2.600l2.600-1c1.100-.4 1.500-.8 1.500-1.300v-1C5.400 7.100 4.800 5.700 4.800 4.200 4.800 2.100 6 .6 8 .6z"/></svg>
<div class="t t12" style="left:96.4px;top:2.5px;letter-spacing:-0.21px;color:#000;">India</div>
</div>
<div class="tr" style="top:700px"><div class="ex p" style="left:44px"></div><div class="hd" style="left:54px;top:10px;width:5px"></div><div class="cb" style="left:61px"></div><svg style="left:75px;top:2px" width="16" height="16" viewBox="0 0 16 16"><path fill="#1a93fa" d="M8 .6c2 0 3.200 1.500 3.200 3.600 0 1.500-.6 2.900-1.400 3.700v1c0 .5.4.9 1.500 1.300l2.600 1c1.200.5 1.900 1.300 1.900 2.600v1.700H.2v-1.700c0-1.300.7-2.100 1.900-2.600l2.600-1c1.100-.4 1.500-.8 1.500-1.300v-1C5.400 7.100 4.800 5.700 4.800 4.200 4.800 2.100 6 .6 8 .6z"/></svg>
<div class="t t12" style="left:96.4px;top:2.5px;letter-spacing:-0.07px;color:#000;">In-Place Archive - HealthMailbox</div>
</div>
<div class="tr" style="top:720px"><div class="ex p" style="left:44px"></div><div class="hd" style="left:54px;top:10px;width:5px"></div><div class="cb" style="left:61px"></div><svg style="left:75px;top:2px" width="16" height="16" viewBox="0 0 16 16"><path fill="#1a93fa" d="M8 .6c2 0 3.200 1.500 3.200 3.600 0 1.500-.6 2.900-1.400 3.700v1c0 .5.4.9 1.500 1.300l2.600 1c1.200.5 1.900 1.300 1.900 2.600v1.700H.2v-1.700c0-1.300.7-2.100 1.900-2.600l2.600-1c1.100-.4 1.500-.8 1.500-1.300v-1C5.400 7.100 4.800 5.700 4.800 4.200 4.800 2.100 6 .6 8 .6z"/></svg>
<div class="t t12" style="left:96.4px;top:2.5px;letter-spacing:-0.04px;color:#000;">In-Place Archive -Simon</div>
</div>
<div class="tr" style="top:740px"><div class="ex p" style="left:44px"></div><div class="hd" style="left:54px;top:10px;width:5px"></div><div class="cb" style="left:61px"></div><svg style="left:75px;top:2px" width="16" height="16" viewBox="0 0 16 16"><path fill="#1a93fa" d="M8 .6c2 0 3.200 1.500 3.200 3.600 0 1.500-.6 2.900-1.400 3.700v1c0 .5.4.9 1.500 1.300l2.600 1c1.200.5 1.900 1.300 1.900 2.600v1.700H.2v-1.700c0-1.300.7-2.100 1.900-2.600l2.600-1c1.100-.4 1.500-.8 1.500-1.300v-1C5.400 7.100 4.800 5.700 4.800 4.200 4.800 2.100 6 .6 8 .6z"/></svg>
<div class="t t12" style="left:96.4px;top:2.5px;letter-spacing:-0.01px;color:#000;">james Mr.. bond</div>
</div>
<div class="tr" style="top:760px"><div class="ex p" style="left:44px"></div><div class="hd" style="left:54px;top:10px;width:5px"></div><div class="cb" style="left:61px"></div><svg style="left:75px;top:2px" width="16" height="16" viewBox="0 0 16 16"><path fill="#1a93fa" d="M8 .6c2 0 3.200 1.500 3.200 3.600 0 1.500-.6 2.900-1.400 3.700v1c0 .5.4.9 1.500 1.300l2.600 1c1.200.5 1.900 1.300 1.900 2.600v1.700H.2v-1.700c0-1.300.7-2.100 1.900-2.600l2.600-1c1.100-.4 1.500-.8 1.500-1.300v-1C5.400 7.100 4.800 5.700 4.800 4.200 4.800 2.100 6 .6 8 .6z"/></svg>
<div class="t t12" style="left:96.4px;top:2.5px;letter-spacing:0.12px;color:#000;">jonthan</div>
</div>
</div>
<div class="abs" style="left:233px;top:181px;width:16px;height:781px;background:#f0f0f0"></div>
<div class="abs" style="left:233px;top:198px;width:15px;height:548px;background:#cdcdcd"></div>
<svg style="left:236px;top:186px" width="9" height="7"><path d="M1 5.800l3.500-3.600L8 5.800" fill="none" stroke="#505050" stroke-width="1.900"/></svg>
<svg style="left:236px;top:949px" width="9" height="7"><path d="M1 1.200l3.500 3.600L8 1.200" fill="none" stroke="#505050" stroke-width="1.900"/></svg>
<div class="abs" style="left:2px;top:962px;width:247px;height:16px;background:#f0f0f0"></div>
<div class="abs" style="left:18px;top:962px;width:136px;height:15px;background:#cdcdcd"></div>
<svg style="left:6px;top:965px" width="7" height="9"><path d="M5.800 1L2.200 4.500 5.800 8" fill="none" stroke="#505050" stroke-width="1.900"/></svg>
<svg style="left:221px;top:965px" width="7" height="9"><path d="M1.200 1l3.600 3.500L1.200 8" fill="none" stroke="#505050" stroke-width="1.900"/></svg>
<div class="abs" style="left:0;top:978px;width:250px;height:38px;background:#f0f0f0;border-top:1px solid #dadada"></div>
<div class="abs" style="left:2px;top:980px;width:34px;height:34px;background:#cfcfcf"></div>
<svg style="left:11px;top:990px" width="16" height="14" viewBox="0 0 16 14"><rect width="16" height="14" fill="#0b5cb8"/><path d="M0 .3l8 8.200 8-8.200" fill="none" stroke="#cfcfcf" stroke-width="1.300"/></svg>
<svg style="left:48px;top:991px" width="14" height="12" viewBox="0 0 14 12"><rect width="14" height="2.200" fill="#0b5cb8"/><g fill="#0b5cb8"><rect x="0" y="4" width="2" height="2"/><rect x="3" y="4" width="2" height="2"/><rect x="6" y="4" width="2" height="2"/><rect x="9" y="4" width="2" height="2"/><rect x="12" y="4" width="2" height="2"/><rect x="0" y="7" width="2" height="2"/><rect x="3" y="7" width="2" height="2"/><rect x="6" y="7" width="2" height="2"/><rect x="9" y="7" width="2" height="2"/><rect x="12" y="7" width="2" height="2"/><rect x="0" y="10" width="2" height="2"/><rect x="3" y="10" width="2" height="2"/><rect x="6" y="10" width="2" height="2"/><rect x="9" y="10" width="2" height="2"/><rect x="12" y="10" width="2" height="2"/></g></svg>
<svg style="left:83px;top:989px" width="17" height="15" viewBox="0 0 17 15"><g fill="#0b5cb8"><circle cx="11.500" cy="3" r="2.700"/><circle cx="5" cy="6" r="2.500"/><circle cx="13" cy="8" r="2.300"/><path d="M0 13.500C0 10.500 2 9 5 9s5 1.500 5 4.500c-3 1.500-7 1.500-10 0z"/><path d="M8 8c0-2 1.500-3 3.500-3s3 1 3.300 2.500"/><path d="M10 13c0-2.200 1.200-3.200 3.200-3.200s3.300 1 3.300 3.200c-2 1-4.500 1-6.500 0z"/></g></svg>
<svg style="left:119.500px;top:989.500px" width="14" height="16" viewBox="0 0 14 16"><rect x=".8" y="2.300" width="12.400" height="12.900" fill="none" stroke="#0b5cb8" stroke-width="1.500"/><path d="M4.200 4.300L7 .4l2.800 3.900z" fill="#0b5cb8"/><path d="M3.800 9l2.300 2.300 4.300-4.800" fill="none" stroke="#0b5cb8" stroke-width="1.400"/></svg>
<svg style="left:155.500px;top:990px" width="15" height="14" viewBox="0 0 15 14"><path fill="#0b5cb8" d="M.3 0H15v14H4.500V9.800H.3z"/><path fill="#0b5cb8" d="M.6 10.600h3.300v3.200z"/></svg>
<svg style="left:188px;top:994px" width="22" height="6"><circle cx="3" cy="3" r="1.900" fill="#333"/><circle cx="11" cy="3" r="1.900" fill="#333"/><circle cx="19" cy="3" r="1.900" fill="#333"/></svg>
<div class="abs" style="left:252px;top:145px;width:5px;height:871px;background:#e4e4e4"></div>
<div class="abs" style="left:253px;top:145px;width:2px;height:871px;background:#dedede"></div>
<div class="abs" style="left:0;top:1016px;width:1920px;height:23px;background:#f1f1f1;border-top:1px solid #d0d0d0"></div>
<div class="t u12" style="left:2.4px;top:1021px;letter-spacing:-0.26px;color:#444;">Elementi: 41</div>
<div class="abs" style="left:257px;top:146px;width:1068px;height:870px;background:#fcfcfc;border:1px solid #fafafa"></div>
<div class="abs" style="left:258px;top:147px;width:1065px;height:21px;background:#e8e8e8;border-bottom:1px solid #a8a8a8"></div>
<div class="abs" style="left:258px;top:168px;width:1065px;height:18px;background:#fdfdfd"></div>
<div class="abs" style="left:258px;top:186px;width:1065px;height:1px;background:#c8c8c8"></div>
<div class="abs" style="left:258px;top:187px;width:18px;height:698px;background:#fdfdfd"></div>
<div class="abs" style="left:258px;top:188px;width:17px;height:697px;background:#f1f1f1;border-right:1px solid #a8a8a8"></div>
<div class="abs" style="left:258px;top:884px;width:17px;height:1px;background:#c8c8c8"></div>
<svg style="left:264px;top:192px" width="5" height="9"><path d="M0 0v9l5-4.500z" fill="#808080"/></svg>
<div class="t g11" style="left:331.5px;top:150.5px;letter-spacing:-0.76px;color:#444;">Da</div>
<div class="t g11" style="left:585px;top:150.5px;letter-spacing:-0.23px;color:#444;">A</div>
<div class="t g11" style="left:837px;top:150.5px;letter-spacing:-0.55px;color:#444;">Soggetto</div>
<div class="t g11" style="left:1090.3px;top:150.5px;letter-spacing:-0.70px;color:#444;">Data</div>
<svg style="left:282.600px;top:151px" width="6.400" height="11" viewBox="0 0 7 11" preserveAspectRatio="none"><rect x=".8" y=".6" width="5.400" height="9.800" rx="2.700" fill="none" stroke="#2a2a2a" stroke-width="1.150"/><path fill="none" stroke="#3a3a3a" stroke-width=".85" d="M1.900 6.400c.2 2 3 2 3.200 0M4.700 2.200L3 5.200"/></svg>
<svg style="left:305px;top:150.500px" width="11" height="13" viewBox="0 0 11 13"><path fill="none" stroke="#555" stroke-width="1" d="M1.500 3h8v9.500h-8zM.2 3h10.600M3.500 2.800V.8h4v2M3.700 5v5.500M5.500 5v5.500M7.300 5v5.500"/></svg>
<svg style="left:560px;top:169.500px" width="14" height="14" viewBox="0 0 14 14"><circle cx="8.800" cy="5.200" r="3.600" fill="#fff" stroke="#3d76b5" stroke-width="1.600"/><path stroke="#3d76b5" stroke-width="2.500" d="M6 8l-4.300 4.200"/></svg>
<svg style="left:813px;top:169.500px" width="14" height="14" viewBox="0 0 14 14"><circle cx="8.800" cy="5.200" r="3.600" fill="#fff" stroke="#3d76b5" stroke-width="1.600"/><path stroke="#3d76b5" stroke-width="2.500" d="M6 8l-4.300 4.200"/></svg>
<svg style="left:1066px;top:169.500px" width="14" height="14" viewBox="0 0 14 14"><circle cx="8.800" cy="5.200" r="3.600" fill="#fff" stroke="#3d76b5" stroke-width="1.600"/><path stroke="#3d76b5" stroke-width="2.500" d="M6 8l-4.300 4.200"/></svg>
<svg style="left:1305px;top:169.500px" width="14" height="14" viewBox="0 0 14 14"><circle cx="8.800" cy="5.200" r="3.600" fill="#fff" stroke="#3d76b5" stroke-width="1.600"/><path stroke="#3d76b5" stroke-width="2.500" d="M6 8l-4.300 4.200"/></svg>
<div class="gr s" style="top:187px;height:18px">
<svg style="left:7px;top:3px" width="6.400" height="11" viewBox="0 0 7 11" preserveAspectRatio="none"><rect x=".8" y=".6" width="5.400" height="9.800" rx="2.700" fill="none" stroke="#2a2a2a" stroke-width="1.150"/><path fill="none" stroke="#3a3a3a" stroke-width=".85" d="M1.900 6.400c.2 2 3 2 3.200 0M4.700 2.200L3 5.200"/></svg>
<div class="t g11" style="left:53.3px;top:1.5px;letter-spacing:-1.00px;">Simon</div>
<div class="t g11" style="left:305.6px;top:1.5px;letter-spacing:-0.71px;">Jason</div>
<div class="t g11" style="left:559.4px;top:1.5px;letter-spacing:-0.46px;">FW: RTF - Fonctions clés</div>
<div class="t g11" style="left:812px;top:1.5px;letter-spacing:-0.24px;">10/26/2018 2:46 PM</div>
</div>
<div class="gr o" style="top:205px;height:17px">
<svg style="left:7px;top:2px" width="6.400" height="11" viewBox="0 0 7 11" preserveAspectRatio="none"><rect x=".8" y=".6" width="5.400" height="9.800" rx="2.700" fill="none" stroke="#2a2a2a" stroke-width="1.150"/><path fill="none" stroke="#3a3a3a" stroke-width=".85" d="M1.900 6.400c.2 2 3 2 3.200 0M4.700 2.200L3 5.200"/></svg>
<div class="t g11" style="left:53.3px;top:0.5px;letter-spacing:-1.00px;">Simon</div>
<div class="t g11" style="left:305.6px;top:0.5px;letter-spacing:-0.54px;">raghav Kumar</div>
<div class="t g11" style="left:559.4px;top:0.5px;letter-spacing:-0.51px;">FW: RTF - Présentation</div>
<div class="t g11" style="left:812px;top:0.5px;letter-spacing:-0.24px;">10/26/2018 2:46 PM</div>
</div>
<div class="gr e" style="top:222px;height:17px">
<svg style="left:7px;top:2px" width="6.400" height="11" viewBox="0 0 7 11" preserveAspectRatio="none"><rect x=".8" y=".6" width="5.400" height="9.800" rx="2.700" fill="none" stroke="#2a2a2a" stroke-width="1.150"/><path fill="none" stroke="#3a3a3a" stroke-width=".85" d="M1.900 6.400c.2 2 3 2 3.200 0M4.700 2.200L3 5.200"/></svg>
<div class="t g11" style="left:53.3px;top:0.5px;letter-spacing:-1.00px;">Simon</div>
<div class="t g11" style="left:305.6px;top:0.5px;letter-spacing:-0.68px;">нешто</div>
<div class="t g11" style="left:559.4px;top:0.5px;letter-spacing:-0.48px;">FW: html- წესრიგშია - Georgian</div>
<div class="t g11" style="left:812px;top:0.5px;letter-spacing:-0.24px;">10/26/2018 2:00 PM</div>
</div>
<div class="gr o" style="top:239px;height:17px">
<svg style="left:7px;top:2px" width="6.400" height="11" viewBox="0 0 7 11" preserveAspectRatio="none"><rect x=".8" y=".6" width="5.400" height="9.800" rx="2.700" fill="none" stroke="#2a2a2a" stroke-width="1.150"/><path fill="none" stroke="#3a3a3a" stroke-width=".85" d="M1.900 6.400c.2 2 3 2 3.200 0M4.700 2.200L3 5.200"/></svg>
<div class="t g11" style="left:53.3px;top:0.5px;letter-spacing:-1.00px;">Simon</div>
<div class="t g11" style="left:305.6px;top:0.5px;letter-spacing:-0.71px;">Jason</div>
<div class="t g11" style="left:559.4px;top:0.5px;letter-spacing:-0.34px;">FW: rtf- დაახლოებით -georgian</div>
<div class="t g11" style="left:812px;top:0.5px;letter-spacing:-0.24px;">10/26/2018 2:01 PM</div>
</div>
<div class="gr e" style="top:256px;height:17px">
<svg style="left:7px;top:2px" width="6.400" height="11" viewBox="0 0 7 11" preserveAspectRatio="none"><rect x=".8" y=".6" width="5.400" height="9.800" rx="2.700" fill="none" stroke="#2a2a2a" stroke-width="1.150"/><path fill="none" stroke="#3a3a3a" stroke-width=".85" d="M1.900 6.400c.2 2 3 2 3.200 0M4.700 2.200L3 5.200"/></svg>
<div class="t g11" style="left:53.3px;top:0.5px;letter-spacing:-1.00px;">Simon</div>
<div class="t g11" style="left:305.6px;top:0.5px;letter-spacing:-0.91px;">Ra</div>
<div class="t g11" style="left:559.4px;top:0.5px;letter-spacing:-0.36px;">FW: rtf- ოფისს დავურეკე.-Georgian</div>
<div class="t g11" style="left:812px;top:0.5px;letter-spacing:-0.24px;">10/26/2018 2:01 PM</div>
</div>
<div class="gr o" style="top:273px;height:17px">
<div class="t g11" style="left:53.3px;top:0.5px;letter-spacing:-1.00px;">Simon</div>
<div class="t g11" style="left:305.6px;top:0.5px;letter-spacing:-0.16px;">check</div>
<div class="t g11" style="left:559.4px;top:0.5px;letter-spacing:-0.42px;">FW: plain- Lancer le logiciel</div>
<div class="t g11" style="left:812px;top:0.5px;letter-spacing:-0.24px;">10/26/2018 2:01 PM</div>
</div>
<div class="gr e" style="top:290px;height:17px">
<svg style="left:7px;top:2px" width="6.400" height="11" viewBox="0 0 7 11" preserveAspectRatio="none"><rect x=".8" y=".6" width="5.400" height="9.800" rx="2.700" fill="none" stroke="#2a2a2a" stroke-width="1.150"/><path fill="none" stroke="#3a3a3a" stroke-width=".85" d="M1.900 6.400c.2 2 3 2 3.200 0M4.700 2.200L3 5.200"/></svg>
<div class="t g11" style="left:53.3px;top:0.5px;letter-spacing:-1.00px;">Simon</div>
<div class="t g11" style="left:305.6px;top:0.5px;letter-spacing:-0.16px;">check</div>
</div>
<div class="gr o" style="top:307px;height:17px">
<svg style="left:7px;top:2px" width="6.400" height="11" viewBox="0 0 7 11" preserveAspectRatio="none"><rect x=".8" y=".6" width="5.400" height="9.800" rx="2.700" fill="none" stroke="#2a2a2a" stroke-width="1.150"/><path fill="none" stroke="#3a3a3a" stroke-width=".85" d="M1.900 6.400c.2 2 3 2 3.200 0M4.700 2.200L3 5.200"/></svg>
<div class="t g11" style="left:53.3px;top:0.5px;letter-spacing:-1.00px;">Simon</div>
<div class="t g11" style="left:305.6px;top:0.5px;letter-spacing:-0.71px;">Jason</div>
</div>
<div class="gr e" style="top:324px;height:17px">
<svg style="left:7px;top:2px" width="6.400" height="11" viewBox="0 0 7 11" preserveAspectRatio="none"><rect x=".8" y=".6" width="5.400" height="9.800" rx="2.700" fill="none" stroke="#2a2a2a" stroke-width="1.150"/><path fill="none" stroke="#3a3a3a" stroke-width=".85" d="M1.900 6.400c.2 2 3 2 3.200 0M4.700 2.200L3 5.200"/></svg>
<div class="t g11" style="left:53.3px;top:0.5px;letter-spacing:-1.00px;">Simon</div>
<div class="t g11" style="left:305.6px;top:0.5px;letter-spacing:-0.71px;">Jason</div>
</div>
<div class="gr o" style="top:341px;height:17px">
<svg style="left:7px;top:2px" width="6.400" height="11" viewBox="0 0 7 11" preserveAspectRatio="none"><rect x=".8" y=".6" width="5.400" height="9.800" rx="2.700" fill="none" stroke="#2a2a2a" stroke-width="1.150"/><path fill="none" stroke="#3a3a3a" stroke-width=".85" d="M1.900 6.400c.2 2 3 2 3.200 0M4.700 2.200L3 5.200"/></svg>
<div class="t g11" style="left:53.3px;top:0.5px;letter-spacing:-1.00px;">Simon</div>
<div class="t g11" style="left:305.6px;top:0.5px;letter-spacing:-0.54px;">raghav Kumar</div>
</div>
<div class="gr e" style="top:358px;height:17px">
<svg style="left:7px;top:2px" width="6.400" height="11" viewBox="0 0 7 11" preserveAspectRatio="none"><rect x=".8" y=".6" width="5.400" height="9.800" rx="2.700" fill="none" stroke="#2a2a2a" stroke-width="1.150"/><path fill="none" stroke="#3a3a3a" stroke-width=".85" d="M1.900 6.400c.2 2 3 2 3.200 0M4.700 2.200L3 5.200"/></svg>
<div class="t g11" style="left:53.3px;top:0.5px;letter-spacing:-1.00px;">Simon</div>
<div class="t g11" style="left:305.6px;top:0.5px;letter-spacing:-0.71px;">Jason</div>
</div>
<div class="gr o" style="top:375px;height:17px">
<svg style="left:7px;top:2px" width="6.400" height="11" viewBox="0 0 7 11" preserveAspectRatio="none"><rect x=".8" y=".6" width="5.400" height="9.800" rx="2.700" fill="none" stroke="#2a2a2a" stroke-width="1.150"/><path fill="none" stroke="#3a3a3a" stroke-width=".85" d="M1.900 6.400c.2 2 3 2 3.200 0M4.700 2.200L3 5.200"/></svg>
<div class="t g11" style="left:53.3px;top:0.5px;letter-spacing:-1.00px;">Simon</div>
<div class="t g11" style="left:305.6px;top:0.5px;letter-spacing:-0.68px;">нешто</div>
</div>
<div class="gr e" style="top:392px;height:17px">
<svg style="left:7px;top:2px" width="6.400" height="11" viewBox="0 0 7 11" preserveAspectRatio="none"><rect x=".8" y=".6" width="5.400" height="9.800" rx="2.700" fill="none" stroke="#2a2a2a" stroke-width="1.150"/><path fill="none" stroke="#3a3a3a" stroke-width=".85" d="M1.900 6.400c.2 2 3 2 3.200 0M4.700 2.200L3 5.200"/></svg>
<div class="t g11" style="left:53.3px;top:0.5px;letter-spacing:-1.00px;">Simon</div>
<div class="t g11" style="left:305.6px;top:0.5px;letter-spacing:-0.84px;">Aa</div>
</div>
<div class="gr o" style="top:409px;height:17px">
<svg style="left:7px;top:2px" width="6.400" height="11" viewBox="0 0 7 11" preserveAspectRatio="none"><rect x=".8" y=".6" width="5.400" height="9.800" rx="2.700" fill="none" stroke="#2a2a2a" stroke-width="1.150"/><path fill="none" stroke="#3a3a3a" stroke-width=".85" d="M1.900 6.400c.2 2 3 2 3.200 0M4.700 2.200L3 5.200"/></svg>
<div class="t g11" style="left:53.3px;top:0.5px;letter-spacing:-1.00px;">Simon</div>
<div class="t g11" style="left:305.6px;top:0.5px;letter-spacing:-0.71px;">Jason</div>
</div>
<div class="gr e" style="top:426px;height:17px">
<svg style="left:7px;top:2px" width="6.400" height="11" viewBox="0 0 7 11" preserveAspectRatio="none"><rect x=".8" y=".6" width="5.400" height="9.800" rx="2.700" fill="none" stroke="#2a2a2a" stroke-width="1.150"/><path fill="none" stroke="#3a3a3a" stroke-width=".85" d="M1.900 6.400c.2 2 3 2 3.200 0M4.700 2.200L3 5.200"/></svg>
<div class="t g11" style="left:53.3px;top:0.5px;letter-spacing:-1.00px;">Simon</div>
<div class="t g11" style="left:305.6px;top:0.5px;letter-spacing:-0.91px;">Ra</div>
</div>
<div class="gr o" style="top:443px;height:17px">
<svg style="left:7px;top:2px" width="6.400" height="11" viewBox="0 0 7 11" preserveAspectRatio="none"><rect x=".8" y=".6" width="5.400" height="9.800" rx="2.700" fill="none" stroke="#2a2a2a" stroke-width="1.150"/><path fill="none" stroke="#3a3a3a" stroke-width=".85" d="M1.900 6.400c.2 2 3 2 3.200 0M4.700 2.200L3 5.200"/></svg>
<div class="t g11" style="left:53.3px;top:0.5px;letter-spacing:-1.00px;">Simon</div>
<div class="t g11" style="left:305.6px;top:0.5px;letter-spacing:-0.71px;">Jason</div>
</div>
<div class="gr e" style="top:460px;height:17px">
<div class="t g11" style="left:53.3px;top:0.5px;letter-spacing:-1.00px;">Simon</div>
<div class="t g11" style="left:305.6px;top:0.5px;letter-spacing:-0.54px;">raghav Kumar</div>
</div>
<div class="gr o" style="top:477px;height:17px">
<svg style="left:7px;top:2px" width="6.400" height="11" viewBox="0 0 7 11" preserveAspectRatio="none"><rect x=".8" y=".6" width="5.400" height="9.800" rx="2.700" fill="none" stroke="#2a2a2a" stroke-width="1.150"/><path fill="none" stroke="#3a3a3a" stroke-width=".85" d="M1.900 6.400c.2 2 3 2 3.200 0M4.700 2.200L3 5.200"/></svg>
<div class="t g11" style="left:53.3px;top:0.5px;letter-spacing:-1.00px;">Simon</div>
<div class="t g11" style="left:305.6px;top:0.5px;letter-spacing:-0.71px;">Jason</div>
</div>
<div class="gr e" style="top:494px;height:17px">
<div class="t g11" style="left:53.3px;top:0.5px;letter-spacing:-1.00px;">Simon</div>
<div class="t g11" style="left:305.6px;top:0.5px;letter-spacing:-0.71px;">Jason</div>
</div>
<div class="gr o" style="top:511px;height:17px">
<svg style="left:7px;top:2px" width="6.400" height="11" viewBox="0 0 7 11" preserveAspectRatio="none"><rect x=".8" y=".6" width="5.400" height="9.800" rx="2.700" fill="none" stroke="#2a2a2a" stroke-width="1.150"/><path fill="none" stroke="#3a3a3a" stroke-width=".85" d="M1.900 6.400c.2 2 3 2 3.200 0M4.700 2.200L3 5.200"/></svg>
<div class="t g11" style="left:53.3px;top:0.5px;letter-spacing:-1.00px;">Simon</div>
<div class="t g11" style="left:305.6px;top:0.5px;letter-spacing:-0.54px;">raghav Kumar</div>
</div>
<div class="gr e" style="top:528px;height:17px">
<svg style="left:7px;top:2px" width="6.400" height="11" viewBox="0 0 7 11" preserveAspectRatio="none"><rect x=".8" y=".6" width="5.400" height="9.800" rx="2.700" fill="none" stroke="#2a2a2a" stroke-width="1.150"/><path fill="none" stroke="#3a3a3a" stroke-width=".85" d="M1.900 6.400c.2 2 3 2 3.200 0M4.700 2.200L3 5.200"/></svg>
<div class="t g11" style="left:53.3px;top:0.5px;letter-spacing:-1.00px;">Simon</div>
<div class="t g11" style="left:305.6px;top:0.5px;letter-spacing:-0.16px;">check</div>
</div>
<div class="gr o" style="top:545px;height:17px">
<svg style="left:7px;top:2px" width="6.400" height="11" viewBox="0 0 7 11" preserveAspectRatio="none"><rect x=".8" y=".6" width="5.400" height="9.800" rx="2.700" fill="none" stroke="#2a2a2a" stroke-width="1.150"/><path fill="none" stroke="#3a3a3a" stroke-width=".85" d="M1.900 6.400c.2 2 3 2 3.200 0M4.700 2.200L3 5.200"/></svg>
<div class="t g11" style="left:53.3px;top:0.5px;letter-spacing:-1.00px;">Simon</div>
<div class="t g11" style="left:305.6px;top:0.5px;letter-spacing:-0.71px;">Jason</div>
</div>
<div class="gr e" style="top:562px;height:17px">
<svg style="left:7px;top:2px" width="6.400" height="11" viewBox="0 0 7 11" preserveAspectRatio="none"><rect x=".8" y=".6" width="5.400" height="9.800" rx="2.700" fill="none" stroke="#2a2a2a" stroke-width="1.150"/><path fill="none" stroke="#3a3a3a" stroke-width=".85" d="M1.900 6.400c.2 2 3 2 3.200 0M4.700 2.200L3 5.200"/></svg>
<div class="t g11" style="left:53.3px;top:0.5px;letter-spacing:-1.00px;">Simon</div>
<div class="t g11" style="left:305.6px;top:0.5px;letter-spacing:-0.49px;">Aa; Ra</div>
</div>
<div class="gr o" style="top:579px;height:17px">
<svg style="left:7px;top:2px" width="6.400" height="11" viewBox="0 0 7 11" preserveAspectRatio="none"><rect x=".8" y=".6" width="5.400" height="9.800" rx="2.700" fill="none" stroke="#2a2a2a" stroke-width="1.150"/><path fill="none" stroke="#3a3a3a" stroke-width=".85" d="M1.900 6.400c.2 2 3 2 3.200 0M4.700 2.200L3 5.200"/></svg>
<div class="t g11" style="left:53.3px;top:0.5px;letter-spacing:-1.00px;">Simon</div>
<div class="t g11" style="left:305.6px;top:0.5px;letter-spacing:-0.68px;">нешто</div>
</div>
<div class="gr e" style="top:596px;height:17px">
<svg style="left:7px;top:2px" width="6.400" height="11" viewBox="0 0 7 11" preserveAspectRatio="none"><rect x=".8" y=".6" width="5.400" height="9.800" rx="2.700" fill="none" stroke="#2a2a2a" stroke-width="1.150"/><path fill="none" stroke="#3a3a3a" stroke-width=".85" d="M1.900 6.400c.2 2 3 2 3.200 0M4.700 2.200L3 5.200"/></svg>
<div class="t g11" style="left:53.3px;top:0.5px;letter-spacing:-1.00px;">Simon</div>
<div class="t g11" style="left:305.6px;top:0.5px;letter-spacing:-0.54px;">raghav Kumar</div>
</div>
<div class="gr o" style="top:613px;height:17px">
<svg style="left:7px;top:2px" width="6.400" height="11" viewBox="0 0 7 11" preserveAspectRatio="none"><rect x=".8" y=".6" width="5.400" height="9.800" rx="2.700" fill="none" stroke="#2a2a2a" stroke-width="1.150"/><path fill="none" stroke="#3a3a3a" stroke-width=".85" d="M1.900 6.400c.2 2 3 2 3.200 0M4.700 2.200L3 5.200"/></svg>
<div class="t g11" style="left:53.3px;top:0.5px;letter-spacing:-1.00px;">Simon</div>
<div class="t g11" style="left:305.6px;top:0.5px;letter-spacing:-0.42px;">нешто; check</div>
</div>
<div class="gr e" style="top:630px;height:17px">
<svg style="left:7px;top:2px" width="6.400" height="11" viewBox="0 0 7 11" preserveAspectRatio="none"><rect x=".8" y=".6" width="5.400" height="9.800" rx="2.700" fill="none" stroke="#2a2a2a" stroke-width="1.150"/><path fill="none" stroke="#3a3a3a" stroke-width=".85" d="M1.900 6.400c.2 2 3 2 3.200 0M4.700 2.200L3 5.200"/></svg>
<div class="t g11" style="left:53.3px;top:0.5px;letter-spacing:-1.00px;">Simon</div>
<div class="t g11" style="left:305.6px;top:0.5px;letter-spacing:-0.71px;">Jason</div>
</div>
<div class="gr o" style="top:647px;height:17px">
<svg style="left:7px;top:2px" width="6.400" height="11" viewBox="0 0 7 11" preserveAspectRatio="none"><rect x=".8" y=".6" width="5.400" height="9.800" rx="2.700" fill="none" stroke="#2a2a2a" stroke-width="1.150"/><path fill="none" stroke="#3a3a3a" stroke-width=".85" d="M1.900 6.400c.2 2 3 2 3.200 0M4.700 2.200L3 5.200"/></svg>
<div class="t g11" style="left:53.3px;top:0.5px;letter-spacing:-1.00px;">Simon</div>
<div class="t g11" style="left:305.6px;top:0.5px;letter-spacing:-0.91px;">Ra</div>
</div>
<div class="gr e" style="top:664px;height:17px">
<div class="t g11" style="left:53.3px;top:0.5px;letter-spacing:-1.00px;">Simon</div>
<div class="t g11" style="left:305.6px;top:0.5px;letter-spacing:-0.68px;">нешто</div>
</div>
<div class="gr o" style="top:681px;height:17px">
<svg style="left:7px;top:2px" width="6.400" height="11" viewBox="0 0 7 11" preserveAspectRatio="none"><rect x=".8" y=".6" width="5.400" height="9.800" rx="2.700" fill="none" stroke="#2a2a2a" stroke-width="1.150"/><path fill="none" stroke="#3a3a3a" stroke-width=".85" d="M1.900 6.400c.2 2 3 2 3.200 0M4.700 2.200L3 5.200"/></svg>
<div class="t g11" style="left:53.3px;top:0.5px;letter-spacing:-1.00px;">Simon</div>
<div class="t g11" style="left:305.6px;top:0.5px;letter-spacing:-0.54px;">raghav Kumar</div>
</div>
<div class="gr e" style="top:698px;height:17px">
<svg style="left:7px;top:2px" width="6.400" height="11" viewBox="0 0 7 11" preserveAspectRatio="none"><rect x=".8" y=".6" width="5.400" height="9.800" rx="2.700" fill="none" stroke="#2a2a2a" stroke-width="1.150"/><path fill="none" stroke="#3a3a3a" stroke-width=".85" d="M1.900 6.400c.2 2 3 2 3.200 0M4.700 2.200L3 5.200"/></svg>
<div class="t g11" style="left:53.3px;top:0.5px;letter-spacing:-1.00px;">Simon</div>
<div class="t g11" style="left:305.6px;top:0.5px;letter-spacing:-0.71px;">Jason</div>
</div>
<div class="gr o" style="top:715px;height:17px">
<div class="t g11" style="left:53.3px;top:0.5px;letter-spacing:-1.00px;">Simon</div>
<div class="t g11" style="left:305.6px;top:0.5px;letter-spacing:-0.54px;">raghav Kumar</div>
</div>
<div class="gr e" style="top:732px;height:17px">
<svg style="left:7px;top:2px" width="6.400" height="11" viewBox="0 0 7 11" preserveAspectRatio="none"><rect x=".8" y=".6" width="5.400" height="9.800" rx="2.700" fill="none" stroke="#2a2a2a" stroke-width="1.150"/><path fill="none" stroke="#3a3a3a" stroke-width=".85" d="M1.900 6.400c.2 2 3 2 3.200 0M4.700 2.200L3 5.200"/></svg>
<div class="t g11" style="left:53.3px;top:0.5px;letter-spacing:-1.00px;">Simon</div>
<div class="t g11" style="left:305.6px;top:0.5px;letter-spacing:-0.71px;">Jason</div>
</div>
<div class="gr o" style="top:749px;height:17px">
<svg style="left:7px;top:2px" width="6.400" height="11" viewBox="0 0 7 11" preserveAspectRatio="none"><rect x=".8" y=".6" width="5.400" height="9.800" rx="2.700" fill="none" stroke="#2a2a2a" stroke-width="1.150"/><path fill="none" stroke="#3a3a3a" stroke-width=".85" d="M1.900 6.400c.2 2 3 2 3.200 0M4.700 2.200L3 5.200"/></svg>
<div class="t g11" style="left:53.3px;top:0.5px;letter-spacing:-1.00px;">Simon</div>
<div class="t g11" style="left:305.6px;top:0.5px;letter-spacing:-0.84px;">Aa</div>
<div class="t g11" style="left:559.4px;top:0.5px;letter-spacing:-0.45px;">FW: German-rtf- Übersicht</div>
<div class="t g11" style="left:812px;top:0.5px;letter-spacing:-0.24px;">10/26/2018 1:55 PM</div>
</div>
<div class="gr e" style="top:766px;height:17px">
<div class="t g11" style="left:53.3px;top:0.5px;letter-spacing:-1.00px;">Simon</div>
<div class="t g11" style="left:305.6px;top:0.5px;letter-spacing:-0.54px;">raghav Kumar</div>
<div class="t g11" style="left:559.4px;top:0.5px;letter-spacing:-0.37px;">FW: plain-სადაზღვევო -Georgian</div>
<div class="t g11" style="left:812px;top:0.5px;letter-spacing:-0.24px;">10/26/2018 1:59 PM</div>
</div>
<div class="gr o" style="top:783px;height:17px">
<svg style="left:7px;top:2px" width="6.400" height="11" viewBox="0 0 7 11" preserveAspectRatio="none"><rect x=".8" y=".6" width="5.400" height="9.800" rx="2.700" fill="none" stroke="#2a2a2a" stroke-width="1.150"/><path fill="none" stroke="#3a3a3a" stroke-width=".85" d="M1.900 6.400c.2 2 3 2 3.200 0M4.700 2.200L3 5.200"/></svg>
<div class="t g11" style="left:53.3px;top:0.5px;letter-spacing:-1.00px;">Simon</div>
<div class="t g11" style="left:305.6px;top:0.5px;letter-spacing:-0.68px;">нешто</div>
<div class="t g11" style="left:559.4px;top:0.5px;letter-spacing:-0.50px;">FW: html- ორგანოების მიერ.-Georgian</div>
<div class="t g11" style="left:812px;top:0.5px;letter-spacing:-0.24px;">10/26/2018 2:00 PM</div>
</div>
<div class="gr e" style="top:800px;height:17px">
<svg style="left:7px;top:2px" width="6.400" height="11" viewBox="0 0 7 11" preserveAspectRatio="none"><rect x=".8" y=".6" width="5.400" height="9.800" rx="2.700" fill="none" stroke="#2a2a2a" stroke-width="1.150"/><path fill="none" stroke="#3a3a3a" stroke-width=".85" d="M1.900 6.400c.2 2 3 2 3.200 0M4.700 2.200L3 5.200"/></svg>
<div class="t g11" style="left:53.3px;top:0.5px;letter-spacing:-1.00px;">Simon</div>
<div class="t g11" style="left:305.6px;top:0.5px;letter-spacing:-0.71px;">Jason</div>
<div class="t g11" style="left:559.4px;top:0.5px;letter-spacing:-0.52px;">FW: Spanish- RTF- Visión global</div>
<div class="t g11" style="left:812px;top:0.5px;letter-spacing:-0.24px;">10/26/2018 1:23 PM</div>
</div>
<div class="gr o" style="top:817px;height:17px">
<div class="t g11" style="left:53.3px;top:0.5px;letter-spacing:-1.00px;">Simon</div>
<div class="t g11" style="left:305.6px;top:0.5px;letter-spacing:-0.54px;">raghav Kumar</div>
<div class="t g11" style="left:559.4px;top:0.5px;letter-spacing:-0.40px;">FW: Japanese - Plaintext- 年間賃料</div>
<div class="t g11" style="left:812px;top:0.5px;letter-spacing:-0.24px;">10/26/2018 1:25 PM</div>
</div>
<div class="gr e" style="top:834px;height:17px">
<svg style="left:7px;top:2px" width="6.400" height="11" viewBox="0 0 7 11" preserveAspectRatio="none"><rect x=".8" y=".6" width="5.400" height="9.800" rx="2.700" fill="none" stroke="#2a2a2a" stroke-width="1.150"/><path fill="none" stroke="#3a3a3a" stroke-width=".85" d="M1.900 6.400c.2 2 3 2 3.200 0M4.700 2.200L3 5.200"/></svg>
<div class="t g11" style="left:53.3px;top:0.5px;letter-spacing:-1.00px;">Simon</div>
<div class="t g11" style="left:305.6px;top:0.5px;letter-spacing:-0.71px;">Jason</div>
<div class="t g11" style="left:559.4px;top:0.5px;letter-spacing:-0.33px;">FW: Japanese-Html- 物件所有者保険</div>
<div class="t g11" style="left:812px;top:0.5px;letter-spacing:-0.24px;">10/26/2018 1:26 PM</div>
</div>
<div class="gr o" style="top:851px;height:17px">
<svg style="left:7px;top:2px" width="6.400" height="11" viewBox="0 0 7 11" preserveAspectRatio="none"><rect x=".8" y=".6" width="5.400" height="9.800" rx="2.700" fill="none" stroke="#2a2a2a" stroke-width="1.150"/><path fill="none" stroke="#3a3a3a" stroke-width=".85" d="M1.900 6.400c.2 2 3 2 3.200 0M4.700 2.200L3 5.200"/></svg>
<div class="t g11" style="left:53.3px;top:0.5px;letter-spacing:-1.00px;">Simon</div>
<div class="t g11" style="left:305.6px;top:0.5px;letter-spacing:-0.54px;">raghav Kumar</div>
<div class="t g11" style="left:559.4px;top:0.5px;letter-spacing:-0.34px;">FW: Japanese- Html- 物件所有者保険</div>
<div class="t g11" style="left:812px;top:0.5px;letter-spacing:-0.24px;">10/26/2018 1:27 PM</div>
</div>
<div class="gr e" style="top:868px;height:17px">
<svg style="left:7px;top:2px" width="6.400" height="11" viewBox="0 0 7 11" preserveAspectRatio="none"><rect x=".8" y=".6" width="5.400" height="9.800" rx="2.700" fill="none" stroke="#2a2a2a" stroke-width="1.150"/><path fill="none" stroke="#3a3a3a" stroke-width=".85" d="M1.900 6.400c.2 2 3 2 3.200 0M4.700 2.200L3 5.200"/></svg>
<div class="t g11" style="left:53.3px;top:0.5px;letter-spacing:-1.00px;">Simon</div>
<div class="t g11" style="left:305.6px;top:0.5px;letter-spacing:-0.71px;">Jason</div>
<div class="t g11" style="left:559.4px;top:0.5px;letter-spacing:-0.44px;">FW: japanese- rtf -  </div>
<div class="t k10" style="left:652.3px;top:0.5px;letter-spacing:-1.29px;">てられましたか</div>
<div class="t g11" style="left:812px;top:0.5px;letter-spacing:-0.24px;">10/26/2018 1:29 PM</div>
</div>
<div class="vl" style="left:300px;top:148px;height:737px"></div>
<div class="vl" style="left:325px;top:148px;height:737px"></div>
<div class="vl" style="left:578px;top:148px;height:737px"></div>
<div class="vl" style="left:831px;top:148px;height:737px"></div>
<div class="vl" style="left:1084px;top:148px;height:737px"></div>
<div class="abs" style="left:258px;top:997px;width:1065px;height:17px;background:#e6e6e6"></div>
<div class="abs" style="left:274px;top:997px;width:1015px;height:17px;background:#fdfdfd;border:1px solid #c0c0c0"></div>
<div class="abs" style="left:258px;top:997px;width:17px;height:17px;background:#fbfbfb;border:1px solid #c0c0c0"></div>
<div class="abs" style="left:1306px;top:997px;width:17px;height:17px;background:#fbfbfb;border:1px solid #c0c0c0"></div>
<svg style="left:264px;top:1001.500px" width="5" height="8"><path d="M5 0v8L0 4z" fill="#777"/></svg>
<svg style="left:1312px;top:1001.500px" width="5" height="8"><path d="M0 0v8l5-4z" fill="#777"/></svg>
<div class="abs" style="left:1325px;top:145px;width:6px;height:871px;background:#e4e4e4"></div>
<div class="abs" style="left:1327px;top:145px;width:2px;height:871px;background:#dedede"></div>
<div class="abs" style="left:1331px;top:145px;width:589px;height:871px;background:#f1f1f1"></div>
<div class="abs" style="left:1910px;top:180px;width:10px;height:836px;background:#fcfcfc"></div>
<div class="abs" style="left:1330px;top:145px;width:590px;height:35px;background:#e6e6e6"></div>
<div class="t u18" style="left:1335px;top:151.5px;letter-spacing:0.51px;color:#444;line-height:22px;">Anteprima</div>
<svg style="left:1867px;top:161px" width="9" height="5"><path d="M0 0h9L4.500 5z" fill="#6e6e6e"/></svg>
<svg style="left:1887px;top:158px" width="7" height="9"><path d="M1.500 .5h4M1.500 .5v5M5 .5v5M0 5.700h7M3.500 6v3" stroke="#6e6e6e" stroke-width="1" fill="none"/><path d="M4.800 .5v5" stroke="#6e6e6e" stroke-width="1.400"/></svg>
<svg style="left:1906px;top:159px" width="7" height="7"><path d="M.5 .5l6.200 6M6.700 .5l-6.200 6" stroke="#6e6e6e" stroke-width="1.200" fill="none"/></svg>
<div class="t g11" style="left:1345px;top:184.5px;letter-spacing:-0.71px;">Da</div>
<div class="t g11" style="left:1451px;top:184.5px;letter-spacing:-0.90px;">Simon</div>
<div class="t g11" style="left:1345px;top:212.7px;letter-spacing:-0.23px;">A</div>
<div class="t g11" style="left:1451px;top:212.7px;letter-spacing:-0.71px;">Jason</div>
<div class="t g11" style="left:1345px;top:240px;letter-spacing:-0.55px;">Soggetto</div>
<div class="t g11" style="left:1451px;top:240px;letter-spacing:-0.43px;">FW: RTF - Fonctions clés</div>
<div class="t g11" style="left:1345px;top:267.7px;letter-spacing:-0.62px;">Data</div>
<div class="t g11" style="left:1451px;top:267.7px;letter-spacing:-0.22px;">10/26/2018 2:46:22 PM</div>
<div class="t g11" style="left:1345px;top:296.7px;letter-spacing:-0.58px;">Allegati</div>
<div class="abs" style="left:1447px;top:298px;width:443px;height:40px;background:#fdfdfd;border:1px solid #d0d0d0"></div>
<div class="abs" style="left:1871px;top:300px;width:17px;height:16px;background:#fdfdfd;border:1px solid #c8c8c8"></div>
<div class="abs" style="left:1871px;top:320px;width:17px;height:16px;background:#fdfdfd;border:1px solid #c8c8c8"></div>
<svg style="left:1875px;top:305px" width="9" height="5"><path d="M0 5h9L4.500 0z" fill="#666"/></svg>
<svg style="left:1875px;top:326px" width="9" height="5"><path d="M0 0h9L4.500 5z" fill="#666"/></svg>
<svg style="left:1450px;top:302px" width="15" height="15" viewBox="0 0 15 15"><path stroke="#555" stroke-width=".8" stroke-dasharray="1 1" fill="none" d="M.6 15V.5h14"/><path fill="#111" d="M6.500 4.200q2.100-2 4.200-.6t4.300-.4v10.200q-2.200 1.600-4.300.4t-4.200.6z"/><path fill="#e8211d" d="M8 5q1.300-1 2.500-.3v3.400Q9.300 7.400 8 8.300z"/><path fill="#1aa01a" d="M11.300 5.100q1.300.6 2.600-.1v3.300q-1.300.7-2.600.1z"/><path fill="#1d3fe0" d="M8 9.300q1.300-1 2.500-.3v3.300q-1.200-.6-2.500.3z"/><path fill="#f5e000" d="M11.300 9.400q1.300.6 2.600-.1v3.200q-1.300.7-2.600.1z"/><path stroke="#e8211d" stroke-width="1" stroke-dasharray="1 1" d="M3 6.500h4M4 8h3"/><path stroke="#1d3fe0" stroke-width="1" stroke-dasharray="1 1" d="M3 10h4M4 11.500h3"/><path stroke="#111" stroke-width="1" stroke-dasharray="1 1" d="M4 5h3M4 13h3"/></svg>
<svg style="left:1449px;top:319px" width="15" height="15" viewBox="0 0 15 15"><path fill="#fff" stroke="#111" stroke-width=".9" d="M2.500 .5h8l3 3v11h-11z"/><path fill="none" stroke="#111" stroke-width=".9" d="M10.500 .5v3h3"/><rect x="9" y="5.500" width="4" height="3.500" fill="#b5b5b5"/><rect x=".6" y="4" width="9" height="6.800" fill="#eaf6f5" stroke="#1d8a86" stroke-width="1.100"/><path stroke="#555" stroke-width="1" d="M2.500 6l3.500 3M6 6L2.500 9M7 7.500h2"/></svg>
<svg style="left:1641px;top:302px" width="15" height="15" viewBox="0 0 15 15"><path fill="#fff" stroke="#111" stroke-width=".9" d="M2.500 .5h8l3 3v11h-11z"/><path fill="none" stroke="#111" stroke-width=".9" d="M10.500 .5v3h3"/><rect x="9" y="5.500" width="4" height="3.500" fill="#b5b5b5"/><rect x=".6" y="4" width="9" height="6.800" fill="#eaf6f5" stroke="#1d8a86" stroke-width="1.100"/><path stroke="#1d8a86" stroke-width="1" fill="none" d="M2 5.800l1.200 3.400 1.300-3 1.300 3 1.200-3.400"/></svg>
<svg style="left:1641px;top:319px" width="15" height="15" viewBox="0 0 15 15"><path fill="#fff" stroke="#111" stroke-width=".9" d="M2.500 .5h8l3 3v11h-11z"/><path fill="none" stroke="#111" stroke-width=".9" d="M10.500 .5v3h3"/><rect x="9" y="5.500" width="4" height="3.500" fill="#b5b5b5"/><rect x=".6" y="4" width="9" height="6.800" fill="#eaf6f5" stroke="#1d8a86" stroke-width="1.100"/><path stroke="#555" stroke-width="1" d="M2.500 6l3.500 3M6 6L2.500 9M7 7.500h2"/></svg>
<div class="t g11" style="left:1466.3px;top:302.7px;letter-spacing:-0.59px;">Spanish- RTF- Visión global</div>
<div class="t g11" style="left:1466.3px;top:320px;letter-spacing:-0.45px;">Product Links.xls</div>
<div class="t g11" style="left:1658.4px;top:302.7px;letter-spacing:-0.54px;">New Release Document.doc</div>
<div class="t g11" style="left:1658.4px;top:320px;letter-spacing:-0.47px;">Product Links.xls</div>
<div class="abs" style="left:1332px;top:348px;width:577px;height:657px;background:#fff;border-top:2px solid #707070;border-left:2px solid #707070;border-right:1px solid #e0e0e0;border-bottom:1px solid #e0e0e0"></div>
<div class="abs" id="viewer" style="left:1334px;top:350px;width:558px;height:638px;background:#fff;overflow:hidden">
<div class="abs" style="left:0;top:52px;width:316px;height:1px;background:#000"></div>
<div class="t cal" style="left:0;top:57.0px;line-height:16px;font-weight:bold;font-size:12.6px;letter-spacing:-0.06px;">From:</div>
<div class="t cal" style="left:38.6px;top:57.0px;line-height:16px;letter-spacing:0.24px;">Simon</div>
<div class="t cal" style="left:0;top:75.05px;line-height:16px;font-weight:bold;font-size:12.6px;letter-spacing:0.10px;">Sent:</div>
<div class="t cal" style="left:35.2px;top:75.05px;line-height:16px;letter-spacing:-0.02px;">Thursday, October 25, 2018 10:06 AM</div>
<div class="t cal" style="left:0;top:93.1px;line-height:16px;font-weight:bold;font-size:12.6px;letter-spacing:0.11px;">To:</div>
<div class="t cal" style="left:22.2px;top:93.1px;line-height:16px;letter-spacing:0.30px;">donna &lt;donna@netmaster.local&gt;; India (India@netmaster.local) &lt;India@netmaster.local&gt;; alexo</div>
<div class="t cal" style="left:0;top:111.15px;line-height:16px;font-weight:bold;font-size:12.6px;letter-spacing:-0.43px;">Cc:</div>
<div class="t cal" style="left:22.2px;top:111.15px;line-height:16px;letter-spacing:0.29px;">&#x27;rizwan@netmaster.local&#x27; &lt;rizwan@netmaster.local&gt;; rocky (rocky@netmaster.local) &lt;rocky@netmaster.local&gt;</div>
<div class="t cal" style="left:0;top:129.2px;line-height:16px;font-weight:bold;font-size:12.6px;letter-spacing:0.04px;">Subject:</div>
<div class="t cal" style="left:53.2px;top:129.2px;line-height:16px;letter-spacing:-0.15px;">RTF - Fonctions clés</div>
<div class="t serb" style="left:0.5px;top:227px;letter-spacing:-0.05px;line-height:30px;">Fonctions clés:</div>
<div class="bu" style="top:277px"></div>
<div class="t ser" style="left:47.5px;top:268px;letter-spacing:0.01px;line-height:20px;">Support pour MS Office 2016.</div>
<div class="bu" style="top:310px"></div>
<div class="t ser" style="left:47.5px;top:301px;letter-spacing:-0.18px;line-height:20px;">Possibilité d&#x27;enregistrer et de charger les informations de l&#x27;analyse.</div>
<div class="bu" style="top:343px"></div>
<div class="t ser" style="left:47.5px;top:334px;letter-spacing:-0.10px;line-height:20px;">Affichage des messages dans en espace organisé en trois volets.</div>
<div class="bu" style="top:376px"></div>
<div class="t ser" style="left:47.5px;top:367px;letter-spacing:0.00px;line-height:20px;">Sélection des messages à récupérer.</div>
<div class="bu" style="top:409px"></div>
<div class="t ser" style="left:47.5px;top:400px;letter-spacing:-0.02px;line-height:20px;">Option de recherche de messages plus rapide.</div>
<div class="bu" style="top:442px"></div>
<div class="t ser" style="left:47.5px;top:433px;line-height:20px;letter-spacing:-0.01px;">Récupération des e-mails, des entrées de calendrier, des contacts, des notes et des journaux.</div>
<div class="bu" style="top:475px"></div>
<div class="t ser" style="left:47.5px;top:466px;letter-spacing:-0.11px;line-height:20px;">Restauration de la mise en forme des messages au format RTF et HTML.</div>
<div class="bu" style="top:508px"></div>
<div class="t ser" style="left:47.5px;top:499px;letter-spacing:-0.13px;line-height:20px;">Récupération de données à partir de fichiers PST chiffrés.</div>
<div class="bu" style="top:541px"></div>
<div class="t ser" style="left:47.5px;top:532px;letter-spacing:-0.12px;line-height:20px;">Récupération des fichiers PST de taille supérieure à 2 Go.</div>
<div class="bu" style="top:574px"></div>
<div class="t ser" style="left:47.5px;top:565px;line-height:20px;letter-spacing:-0.15px;">Le fichier récupéré peut être enregistré sous forme de fichier PST sur n&#x27;importe quel disque.</div>
<div class="bu" style="top:607px"></div>
<div class="t ser" style="left:47.5px;top:598px;line-height:20px;letter-spacing:-0.10px;">Possibilité d&#x27;enregistrer des messages uniques aux formats EML, MSG, RTF, HTML et PDF.</div>
<div class="bu" style="top:640px"></div>
<div class="t ser" style="left:47.5px;top:631px;line-height:20px;letter-spacing:-0.25px;">Une fonction de prévisualisation améliorée pour les calendriers, contacts, tâches, notes.</div>
</div>
<div class="abs" style="left:1892px;top:350px;width:16px;height:638px;background:#f0f0f0"></div>
<div class="abs" style="left:1892px;top:367px;width:15px;height:508px;background:#cdcdcd"></div>
<svg style="left:1895px;top:355px" width="9" height="7"><path d="M1 5.800l3.500-3.600L8 5.800" fill="none" stroke="#505050" stroke-width="1.900"/></svg>
<svg style="left:1895px;top:975px" width="9" height="7"><path d="M1 1.200l3.500 3.600L8 1.200" fill="none" stroke="#505050" stroke-width="1.900"/></svg>
<div class="abs" style="left:1334px;top:988px;width:574px;height:16px;background:#f0f0f0"></div>
<div class="abs" style="left:1350px;top:988px;width:157px;height:15px;background:#cdcdcd"></div>
<svg style="left:1338px;top:991px" width="7" height="9"><path d="M5.800 1L2.200 4.500 5.800 8" fill="none" stroke="#505050" stroke-width="1.900"/></svg>
<svg style="left:1879px;top:991px" width="7" height="9"><path d="M1.200 1l3.600 3.500L1.200 8" fill="none" stroke="#505050" stroke-width="1.900"/></svg>
<div class="abs" style="left:1331px;top:1005px;width:589px;height:11px;background:#fbfbfb"></div>
<div class="abs" id="dlg" style="left:675px;top:284px;width:570px;height:473px;background:#f0f0f0;border:1px solid #1565c7;box-shadow:0 1px 7px rgba(20,30,60,.38)">
<div class="abs" style="left:0;top:0;width:568px;height:30px;background:#2b579a"></div>
<div class="t u12" style="left:11.5px;top:11px;letter-spacing:-0.19px;color:#fff;">Salva caselle di posta</div>
<svg style="left:547px;top:7px" width="8" height="8"><path d="M.8 .8l6 6M6.800 .8l-6 6" stroke="#fff" stroke-width="1.500" fill="none"/></svg>
<div class="t g11" style="left:19px;top:47.5px;letter-spacing:-0.43px;">Le caselle di posta selezionate saranno elaborate nell&#x27;ordine indicato di seguito.</div>
<div class="t g11" style="left:19px;top:60.8px;letter-spacing:-0.47px;">Per modificare l&#x27;ordine di elaborazione in base alle tue esigenze, inserisci la preferenza nella colonna Priorità.</div>
<div class="abs" style="left:18px;top:113px;width:531px;height:304px;background:#fdfdfd;border:1px solid #d0d0d0"></div>
<div class="abs" style="left:20px;top:115px;width:527px;height:32px;background:#e8e8e8;border-bottom:1px solid #a8a8a8"></div>
<div class="abs" style="left:20px;top:178px;width:527px;height:1px;background:#cfcfcf"></div>
<div class="abs" style="left:20px;top:177px;width:493px;height:1px;background:#d8d8d8"></div>
<div class="abs" style="left:20px;top:179px;width:493px;height:29px;background:#fdfdfd"></div>
<div class="t g11" style="left:29.5px;top:186.5px;letter-spacing:-0.4px;">1</div>
<div class="t g11" style="left:129px;top:186.5px;letter-spacing:-1.09px;">Aa</div>
<div class="abs" style="left:20px;top:208px;width:493px;height:29px;background:#f2f2f2"></div>
<div class="t g11" style="left:29.5px;top:215.5px;letter-spacing:-0.4px;">2</div>
<div class="t g11" style="left:129px;top:215.5px;letter-spacing:-0.88px;">Aa1</div>
<div class="abs" style="left:20px;top:237px;width:493px;height:29px;background:#fdfdfd"></div>
<div class="t g11" style="left:29.5px;top:244.5px;letter-spacing:-0.4px;">3</div>
<div class="t g11" style="left:129px;top:244.5px;letter-spacing:-0.71px;">Ab1</div>
<div class="abs" style="left:20px;top:266px;width:493px;height:29px;background:#f2f2f2"></div>
<div class="t g11" style="left:29.5px;top:273.5px;letter-spacing:-0.4px;">4</div>
<div class="t g11" style="left:129px;top:273.5px;letter-spacing:-0.55px;">Ab3</div>
<div class="abs" style="left:20px;top:208px;width:493px;height:1px;background:#d4d4d4"></div>
<div class="abs" style="left:20px;top:237px;width:493px;height:1px;background:#d4d4d4"></div>
<div class="abs" style="left:20px;top:266px;width:493px;height:1px;background:#d4d4d4"></div>
<div class="abs" style="left:20px;top:295px;width:493px;height:1px;background:#d4d4d4"></div>
<div class="vl" style="left:120px;top:115px;height:180px;background:#d0d0d0"></div>
<div class="vl" style="left:512px;top:115px;height:180px;background:#d0d0d0"></div>
<div class="t g11" style="left:31px;top:124.5px;letter-spacing:-0.67px;">Priorità</div>
<div class="t g11" style="left:130.6px;top:124.5px;letter-spacing:-0.44px;">Casella di posta dalla tuo EDB [fonte]</div>
<div class="t g11" style="left:130.6px;top:155.5px;letter-spacing:-0.69px;color:#666;">Cerca</div>
<svg style="left:494px;top:155px" width="14" height="14" viewBox="0 0 14 14"><circle cx="8.800" cy="5.200" r="3.600" fill="#fff" stroke="#3d76b5" stroke-width="1.600"/><path stroke="#3d76b5" stroke-width="2.500" d="M6 8l-4.300 4.200"/></svg>
<div class="abs" style="left:477px;top:430px;width:75px;height:23px;background:#d2d2d2;border:1px solid #b4b4b4"></div>
<div class="t g11" style="left:499px;top:434.5px;letter-spacing:-0.45px;color:#444;">Avanti</div>
</div>
</body></html>
